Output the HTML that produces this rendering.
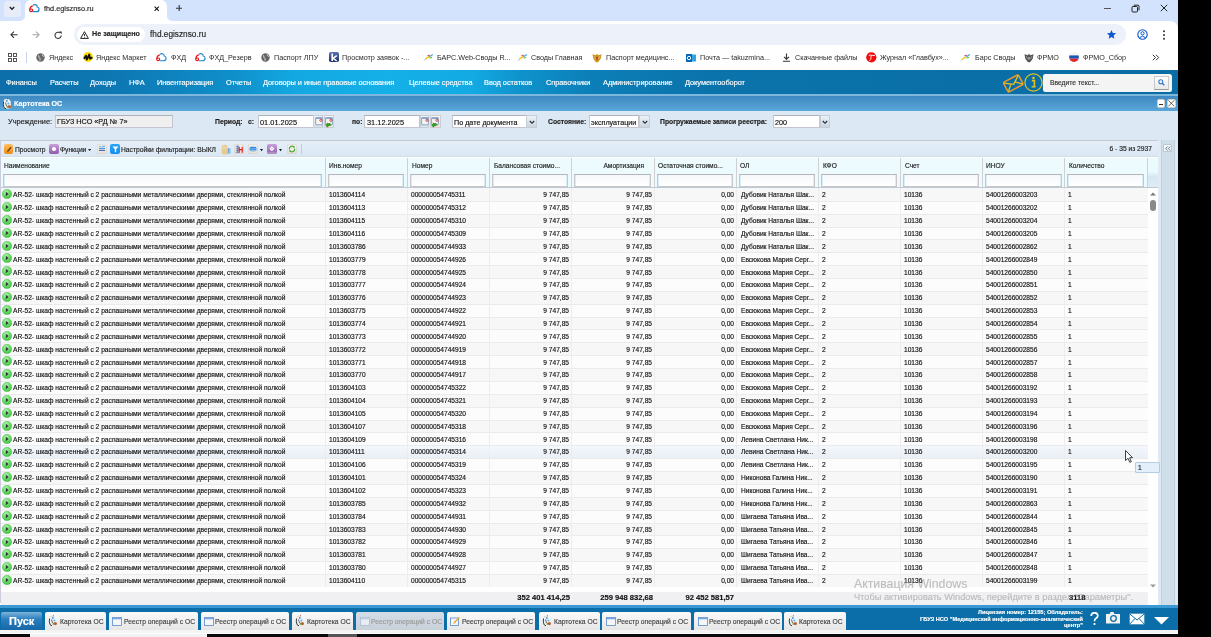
<!DOCTYPE html><html><head><meta charset="utf-8"><style>
*{margin:0;padding:0;box-sizing:border-box}
html,body{width:1211px;height:637px;overflow:hidden;background:#000;font-family:"Liberation Sans",sans-serif}
.a{position:absolute}
.t{position:absolute;white-space:nowrap;line-height:1;-webkit-text-stroke:0.15px currentColor;will-change:transform}
.r{position:absolute;white-space:nowrap;line-height:1;text-align:right}
</style></head><body>
<div class="a" style="left:0;top:0;width:1178px;height:637px;background:#fff;overflow:hidden">
<svg width="0" height="0" style="position:absolute"><defs><radialGradient id="gg" cx="0.4" cy="0.3" r="0.8"><stop offset="0" stop-color="#b0f7b0"/><stop offset="0.55" stop-color="#62da62"/><stop offset="1" stop-color="#3cb83c"/></radialGradient></defs></svg>
<div class="a" style="left:0;top:0;width:1178px;height:30px;background:#d3e3fd"></div>
<div class="a" style="left:4px;top:1px;width:17px;height:16px;border-radius:4px;background:#e6edf9"></div>
<svg class="a" style="left:9px;top:6px" width="6" height="5" viewBox="0 0 6 5"><path d="M0.8 1 L3 3.3 L5.2 1" stroke="#222" stroke-width="1.3" fill="none"/></svg>
<div class="a" style="left:25px;top:0px;width:142px;height:22px;background:#fff;border-radius:6px 6px 0 0"></div>
<svg class="a" style="left:20px;top:14px" width="6" height="7" viewBox="0 0 6 7"><path d="M0 7 Q5 7 5.5 0 L6 7 Z" fill="#fff"/></svg>
<svg class="a" style="left:166px;top:14px" width="6" height="7" viewBox="0 0 6 7"><path d="M6 7 Q1 7 0.5 0 L0 7 Z" fill="#fff"/></svg>
<svg class="a" style="left:26px;top:2px" width="16" height="14" viewBox="0 0 16 14"><path d="M6.8 3.9 Q4.2 4.3 3.7 7.5 Q3.5 9.6 5.2 9.6 Q6.7 9.5 6.7 8.2 Q6.6 6.9 5.2 7 Q4.2 7.1 3.8 8" fill="none" stroke="#e8141c" stroke-width="1.2"/><path d="M7 3.3 Q8.5 2.3 10 2.9 Q11.3 3.5 11.2 5 Q13.1 5.3 13.1 7.4 Q12.9 9.7 10.8 9.7 L6.8 9.7" fill="none" stroke="#1c86d8" stroke-width="1.2"/></svg>
<div class="t" style="left:43.8px;top:5.1px;font-size:7.3px;color:#1f1f1f;font-weight:400;">fhd.egisznso.ru</div>
<svg class="a" style="left:154.3px;top:5.6px" width="5.4" height="5.4" viewBox="0 0 5.4 5.4"><path d="M0.6 0.6 L4.8 4.8 M4.8 0.6 L0.6 4.8" stroke="#111" stroke-width="1.1"/></svg>
<svg class="a" style="left:175.8px;top:4.9px" width="6.4" height="6.4" viewBox="0 0 6.4 6.4"><path d="M3.2 0 V6.4 M0 3.2 H6.4" stroke="#333" stroke-width="1.1"/></svg>
<div class="a" style="left:1104px;top:7.5px;width:7px;height:1px;background:#555"></div>
<svg class="a" style="left:1131px;top:4px" width="9" height="9" viewBox="0 0 9 9"><rect x="1" y="2.5" width="5.5" height="5.5" rx="1" fill="none" stroke="#222" stroke-width="1"/><path d="M2.8 1.2 H7 Q8 1.2 8 2.2 V6.3" fill="none" stroke="#222" stroke-width="1"/></svg>
<svg class="a" style="left:1160px;top:4px" width="8" height="8" viewBox="0 0 8 8"><path d="M0.8 0.8 L7.2 7.2 M7.2 0.8 L0.8 7.2" stroke="#222" stroke-width="1"/></svg>
<div class="a" style="left:0;top:20.5px;width:1178px;height:49.5px;background:#fff;border-radius:0 8px 0 0"></div>
<svg class="a" style="left:9.6px;top:30.8px" width="8" height="8" viewBox="0 0 8 8"><path d="M7.6 3.7 H1 M4 0.6 L0.9 3.7 L4 6.8" stroke="#333" stroke-width="1.05" fill="none"/></svg>
<svg class="a" style="left:31.8px;top:30.8px" width="8" height="8" viewBox="0 0 8 8"><path d="M0.4 3.7 H7 M4 0.6 L7.1 3.7 L4 6.8" stroke="#a8a8a8" stroke-width="1.05" fill="none"/></svg>
<svg class="a" style="left:53.8px;top:30.6px" width="8.4" height="8.4" viewBox="0 0 8.4 8.4"><path d="M7.2 4.4 A3.1 3.1 0 1 1 6 1.9" stroke="#333" stroke-width="1.05" fill="none"/><path d="M4.9 0.5 H7.7 V3.3 Z" fill="#333"/></svg>
<div class="a" style="left:74px;top:24.3px;width:1052px;height:20.5px;background:#edf2fa;border-radius:10px"></div>
<div class="a" style="left:76.5px;top:26.8px;width:68px;height:15.2px;background:#fff;border-radius:8px"></div>
<svg class="a" style="left:80px;top:30.5px" width="9" height="8" viewBox="0 0 9 8"><path d="M4.5 0.7 L8.4 7.4 H0.6 Z" fill="none" stroke="#222" stroke-width="1"/><path d="M4.5 3 V5.2 M4.5 6 V6.6" stroke="#222" stroke-width="0.9"/></svg>
<div class="t" style="left:91.8px;top:30.4px;font-size:7.2px;color:#1f1f1f;font-weight:700;">Не защищено</div>
<div class="t" style="left:149.7px;top:30.6px;font-size:8.28px;color:#1f1f1f;font-weight:400;">fhd.egisznso.ru</div>
<svg class="a" style="left:1106px;top:29px" width="11" height="11" viewBox="0 0 24 24"><path d="M12 2 L14.9 8.6 L22 9.3 L16.6 14 L18.2 21 L12 17.3 L5.8 21 L7.4 14 L2 9.3 L9.1 8.6 Z" fill="#0b57d0"/></svg>
<svg class="a" style="left:1136.5px;top:29px" width="11" height="11" viewBox="0 0 11 11"><circle cx="5.5" cy="5.5" r="4.7" fill="none" stroke="#0b57d0" stroke-width="1.1"/><circle cx="5.5" cy="4.3" r="1.6" fill="none" stroke="#0b57d0" stroke-width="1"/><path d="M2.6 8.6 Q5.5 5.8 8.4 8.6" fill="none" stroke="#0b57d0" stroke-width="1"/></svg>
<svg class="a" style="left:1162px;top:29.5px" width="4" height="10" viewBox="0 0 4 10"><circle cx="2" cy="1.3" r="1" fill="#333"/><circle cx="2" cy="5" r="1" fill="#333"/><circle cx="2" cy="8.7" r="1" fill="#333"/></svg>
<svg class="a" style="left:8px;top:53px" width="9" height="9" viewBox="0 0 9 9"><rect x="0.5" y="0.5" width="3" height="3" fill="none" stroke="#444" stroke-width="0.9"/><rect x="5.5" y="0.5" width="3" height="3" fill="none" stroke="#444" stroke-width="0.9"/><rect x="0.5" y="5.5" width="3" height="3" fill="none" stroke="#444" stroke-width="0.9"/><rect x="5.5" y="5.5" width="3" height="3" fill="none" stroke="#444" stroke-width="0.9"/></svg>
<div class="a" style="left:26px;top:52px;width:1px;height:11px;background:#c6d4ee"></div>
<svg class="a" style="left:36px;top:53px" width="9" height="9" viewBox="0 0 9 9"><circle cx="4.5" cy="4.5" r="4.2" fill="#666"/><path d="M2 2.5 Q3.5 3 3 4.5 Q4.5 5 4 7.5 M6 1.5 Q6.5 3 7.8 3.5" stroke="#eee" stroke-width="0.9" fill="none"/></svg>
<div class="t" style="left:48.8px;top:53.8px;font-size:7.2px;color:#2a2a2a;font-weight:400;-webkit-text-stroke:0">Яндекс</div>
<svg class="a" style="left:82.9px;top:52px" width="10" height="10" viewBox="0 0 10 10"><circle cx="5" cy="5" r="4.9" fill="#ffdc00"/><path d="M1 6.8 L3 3.8 L3.8 7.6 L6.2 2.6 L7 6.8 L9.4 5.4" stroke="#111" stroke-width="1.9" fill="none" stroke-linejoin="round"/></svg>
<div class="t" style="left:96px;top:53.8px;font-size:7.2px;color:#2a2a2a;font-weight:400;-webkit-text-stroke:0">Яндекс Маркет</div>
<svg class="a" style="left:152.7px;top:51px" width="16" height="14" viewBox="0 0 16 14"><path d="M6.8 3.9 Q4.2 4.3 3.7 7.5 Q3.5 9.6 5.2 9.6 Q6.7 9.5 6.7 8.2 Q6.6 6.9 5.2 7 Q4.2 7.1 3.8 8" fill="none" stroke="#e8141c" stroke-width="1.1"/><path d="M7 3.3 Q8.5 2.3 10 2.9 Q11.3 3.5 11.2 5 Q13.1 5.3 13.1 7.4 Q12.9 9.7 10.8 9.7 L6.8 9.7" fill="none" stroke="#1c86d8" stroke-width="1.1"/></svg>
<div class="t" style="left:171px;top:53.8px;font-size:7.2px;color:#2a2a2a;font-weight:400;-webkit-text-stroke:0">ФХД</div>
<svg class="a" style="left:191.7px;top:51px" width="16" height="14" viewBox="0 0 16 14"><path d="M6.8 3.9 Q4.2 4.3 3.7 7.5 Q3.5 9.6 5.2 9.6 Q6.7 9.5 6.7 8.2 Q6.6 6.9 5.2 7 Q4.2 7.1 3.8 8" fill="none" stroke="#e8141c" stroke-width="1.1"/><path d="M7 3.3 Q8.5 2.3 10 2.9 Q11.3 3.5 11.2 5 Q13.1 5.3 13.1 7.4 Q12.9 9.7 10.8 9.7 L6.8 9.7" fill="none" stroke="#1c86d8" stroke-width="1.1"/></svg>
<div class="t" style="left:209px;top:53.8px;font-size:7.2px;color:#2a2a2a;font-weight:400;-webkit-text-stroke:0">ФХД_Резерв</div>
<svg class="a" style="left:261px;top:53px" width="9" height="9" viewBox="0 0 9 9"><circle cx="4.5" cy="4.5" r="4.2" fill="#666"/><path d="M2 2.5 Q3.5 3 3 4.5 Q4.5 5 4 7.5 M6 1.5 Q6.5 3 7.8 3.5" stroke="#eee" stroke-width="0.9" fill="none"/></svg>
<div class="t" style="left:274.3px;top:53.8px;font-size:7.2px;color:#2a2a2a;font-weight:400;-webkit-text-stroke:0">Паспорт ЛПУ</div>
<svg class="a" style="left:328.9px;top:52px" width="10" height="10" viewBox="0 0 10 10"><defs><linearGradient id="kg" x1="0" y1="0" x2="0" y2="1"><stop offset="0" stop-color="#5a74b0"/><stop offset="1" stop-color="#1c3068"/></linearGradient></defs><rect x="0" y="0" width="10" height="10" rx="1.8" fill="url(#kg)"/><path d="M3.2 1.4 V9" stroke="#fff" stroke-width="1.6"/><path d="M7.8 3.6 L4 6.3 L7.8 9" stroke="#fff" stroke-width="1.5" fill="none"/></svg>
<div class="t" style="left:342px;top:53.8px;font-size:7.2px;color:#2a2a2a;font-weight:400;-webkit-text-stroke:0">Просмотр заявок -...</div>
<svg class="a" style="left:422.7px;top:53px" width="11" height="9" viewBox="0 0 11 9"><path d="M0.6 7.8 L3.2 6.4 M1.4 6.6 L4 5" stroke="#d6dae6" stroke-width="1"/><path d="M2.6 5.8 L5.8 3.8" stroke="#f5c518" stroke-width="1.4" stroke-linecap="round"/><path d="M5 2.6 L6.4 2.2" stroke="#e04848" stroke-width="1.1" stroke-linecap="round"/><path d="M6.8 3.4 L9.4 1.8" stroke="#2aa8f2" stroke-width="1.2" stroke-linecap="round"/><path d="M6.8 5 L8.6 4.5" stroke="#6ab82a" stroke-width="1.1" stroke-linecap="round"/></svg>
<div class="t" style="left:436.7px;top:53.8px;font-size:7.2px;color:#2a2a2a;font-weight:400;-webkit-text-stroke:0">БАРС.Web-Своды R...</div>
<svg class="a" style="left:517.4000000000001px;top:53px" width="11" height="9" viewBox="0 0 11 9"><path d="M0.6 7.8 L3.2 6.4 M1.4 6.6 L4 5" stroke="#d6dae6" stroke-width="1"/><path d="M2.6 5.8 L5.8 3.8" stroke="#f5c518" stroke-width="1.4" stroke-linecap="round"/><path d="M5 2.6 L6.4 2.2" stroke="#e04848" stroke-width="1.1" stroke-linecap="round"/><path d="M6.8 3.4 L9.4 1.8" stroke="#2aa8f2" stroke-width="1.2" stroke-linecap="round"/><path d="M6.8 5 L8.6 4.5" stroke="#6ab82a" stroke-width="1.1" stroke-linecap="round"/></svg>
<div class="t" style="left:531px;top:53.8px;font-size:7.2px;color:#2a2a2a;font-weight:400;-webkit-text-stroke:0">Своды Главная</div>
<svg class="a" style="left:592px;top:52.5px" width="10" height="10" viewBox="0 0 10 10"><path d="M5 0.8 L6.2 2.2 L9.5 1.2 L8.8 5.5 L6.5 8.8 L5 9.5 L3.5 8.8 L1.2 5.5 L0.5 1.2 L3.8 2.2 Z" fill="#c8961e"/><path d="M2 3 L3.5 6 M8 3 L6.5 6" stroke="#fff" stroke-width="0.6" opacity="0.6"/><rect x="4" y="4" width="2" height="2.6" fill="#d23a2a"/></svg>
<div class="t" style="left:605.5px;top:53.8px;font-size:7.2px;color:#2a2a2a;font-weight:400;-webkit-text-stroke:0">Паспорт медицинс...</div>
<svg class="a" style="left:686px;top:52.5px" width="10" height="10" viewBox="0 0 10 10"><rect x="3.5" y="1.5" width="6.5" height="7" fill="#28a8ea"/><rect x="0" y="1" width="6" height="8" rx="0.8" fill="#0364b8"/><circle cx="3" cy="5" r="1.7" fill="none" stroke="#fff" stroke-width="1"/></svg>
<div class="t" style="left:700px;top:53.8px;font-size:7.2px;color:#2a2a2a;font-weight:400;-webkit-text-stroke:0">Почта — takuzmina...</div>
<svg class="a" style="left:782px;top:53px" width="9" height="9" viewBox="0 0 9 9"><path d="M4.5 0.5 V6 M2 3.8 L4.5 6.2 L7 3.8 M1 8.3 H8" stroke="#333" stroke-width="1.1" fill="none"/></svg>
<div class="t" style="left:794.5px;top:53.8px;font-size:7.2px;color:#2a2a2a;font-weight:400;-webkit-text-stroke:0">Скачанные файлы</div>
<svg class="a" style="left:865.8px;top:51.8px" width="11" height="11" viewBox="0 0 11 11"><circle cx="5.3" cy="5.3" r="5.1" fill="#f40a0a"/><path d="M2.8 3.4 Q4 2.6 5.2 3.3 L9 3.5 M5.2 3.3 Q5 6 4.6 7.6 Q4.2 8.6 3.3 8.4" stroke="#fff" stroke-width="0.9" fill="none"/></svg>
<div class="t" style="left:879.6px;top:53.8px;font-size:7.2px;color:#2a2a2a;font-weight:400;-webkit-text-stroke:0">Журнал «Главбух»...</div>
<svg class="a" style="left:960.3000000000001px;top:53px" width="11" height="9" viewBox="0 0 11 9"><path d="M0.6 7.8 L3.2 6.4 M1.4 6.6 L4 5" stroke="#d6dae6" stroke-width="1"/><path d="M2.6 5.8 L5.8 3.8" stroke="#f5c518" stroke-width="1.4" stroke-linecap="round"/><path d="M5 2.6 L6.4 2.2" stroke="#e04848" stroke-width="1.1" stroke-linecap="round"/><path d="M6.8 3.4 L9.4 1.8" stroke="#2aa8f2" stroke-width="1.2" stroke-linecap="round"/><path d="M6.8 5 L8.6 4.5" stroke="#6ab82a" stroke-width="1.1" stroke-linecap="round"/></svg>
<div class="t" style="left:974.5px;top:53.8px;font-size:7.2px;color:#2a2a2a;font-weight:400;-webkit-text-stroke:0">Барс Своды</div>
<svg class="a" style="left:1024px;top:52.5px" width="10" height="10" viewBox="0 0 10 10"><path d="M5 0.8 L6.2 2.2 L9.5 1.2 L8.8 5.5 L6.5 8.8 L5 9.5 L3.5 8.8 L1.2 5.5 L0.5 1.2 L3.8 2.2 Z" fill="#555"/><path d="M2 3 L3.5 6 M8 3 L6.5 6" stroke="#fff" stroke-width="0.6" opacity="0.6"/><rect x="4" y="4" width="2" height="2.6" fill="#999"/></svg>
<div class="t" style="left:1037.3px;top:53.8px;font-size:7.2px;color:#2a2a2a;font-weight:400;-webkit-text-stroke:0">ФРМО</div>
<svg class="a" style="left:1069.4px;top:52.3px" width="10" height="10" viewBox="0 0 10 10"><clipPath id="fc"><circle cx="5" cy="5" r="4.9"/></clipPath><g clip-path="url(#fc)"><rect x="0" y="0" width="10" height="3.4" fill="#f4f4f4"/><rect x="0" y="3.4" width="10" height="3.3" fill="#1c57b5"/><rect x="0" y="6.7" width="10" height="3.3" fill="#e0242a"/></g></svg>
<div class="t" style="left:1083px;top:53.8px;font-size:7.2px;color:#2a2a2a;font-weight:400;-webkit-text-stroke:0">ФРМО_Сбор</div>
<svg class="a" style="left:1151.5px;top:54px" width="8" height="7" viewBox="0 0 8 7"><path d="M0.8 0.8 L3.5 3.5 L0.8 6.2 M4 0.8 L6.7 3.5 L4 6.2" stroke="#333" stroke-width="1" fill="none"/></svg>
<div class="a" style="left:0;top:70px;width:1178px;height:25px;background:linear-gradient(90deg,#0d6ea9 0%,#0d78b3 10%,#0f90cb 20%,#13a8e2 25%,#15b0e8 33%,#13aae4 40%,#0f93cd 44%,#0c7fb8 50%,#0b73ab 60%,#0a6ca4 100%)"></div>
<div class="a" style="left:0;top:70px;width:1178px;height:25px;opacity:.18;background-image:radial-gradient(#000 0.5px,transparent 0.6px);background-size:2px 2px"></div>
<div class="a" style="left:0;top:94.2px;width:1178px;height:1.6px;background:#7db7dc"></div>
<div class="t" style="left:6px;top:79.2px;font-size:7.4px;color:#fff;font-weight:400;letter-spacing:-0.05px">Финансы</div>
<div class="t" style="left:49.5px;top:79.2px;font-size:7.4px;color:#fff;font-weight:400;letter-spacing:-0.05px">Расчеты</div>
<div class="t" style="left:90px;top:79.2px;font-size:7.4px;color:#fff;font-weight:400;letter-spacing:-0.05px">Доходы</div>
<div class="t" style="left:128.8px;top:79.2px;font-size:7.4px;color:#fff;font-weight:400;letter-spacing:-0.05px">НФА</div>
<div class="t" style="left:156.5px;top:79.2px;font-size:7.4px;color:#fff;font-weight:400;letter-spacing:-0.05px">Инвентаризация</div>
<div class="t" style="left:226px;top:79.2px;font-size:7.4px;color:#fff;font-weight:400;letter-spacing:-0.05px">Отчеты</div>
<div class="t" style="left:263.4px;top:79.2px;font-size:7.4px;color:#fff;font-weight:400;letter-spacing:-0.05px">Договоры и иные правовые основания</div>
<div class="t" style="left:408.6px;top:79.2px;font-size:7.4px;color:#fff;font-weight:400;letter-spacing:-0.05px">Целевые средства</div>
<div class="t" style="left:484.4px;top:79.2px;font-size:7.4px;color:#fff;font-weight:400;letter-spacing:-0.05px">Ввод остатков</div>
<div class="t" style="left:546px;top:79.2px;font-size:7.4px;color:#fff;font-weight:400;letter-spacing:-0.05px">Справочники</div>
<div class="t" style="left:602.8px;top:79.2px;font-size:7.4px;color:#fff;font-weight:400;letter-spacing:-0.05px">Администрирование</div>
<div class="t" style="left:685px;top:79.2px;font-size:7.4px;color:#fff;font-weight:400;letter-spacing:-0.05px">Документооборот</div>
<svg class="a" style="left:1002px;top:72.5px" width="22" height="20" viewBox="0 0 22 20"><g transform="rotate(-28 11 10)"><rect x="2.5" y="5" width="17" height="11" rx="1.5" fill="none" stroke="#e8962a" stroke-width="1.6"/><path d="M3 5.8 L11 11.5 L19 5.8 M3 15.5 L8.5 10 M19 15.5 L13.5 10" stroke="#f0c020" stroke-width="1.3" fill="none"/></g></svg>
<svg class="a" style="left:1023.5px;top:73px" width="19" height="19" viewBox="0 0 19 19"><circle cx="9.5" cy="9.5" r="8.6" fill="none" stroke="#e6c21e" stroke-width="1.2"/><circle cx="9.5" cy="5" r="1.3" fill="#e6c21e"/><path d="M7.8 7.6 H10.4 V13.8 H11.6 M7.6 13.8 H11.6" stroke="#e6c21e" stroke-width="1.6" fill="none"/></svg>
<div class="a" style="left:1043.3px;top:73.5px;width:128.4px;height:18.1px;background:#f4f4f4;border-radius:2.5px"></div>
<div class="t" style="left:1049.6px;top:80.4px;font-size:6.75px;color:#333;font-weight:400;">Введите текст...</div>
<div class="a" style="left:1154.4px;top:76px;width:14.5px;height:13.8px;background:linear-gradient(#fdfdfd,#e9e9e9);border:1px solid #c9c9c9;border-bottom-color:#9a9a9a"></div>
<svg class="a" style="left:1158px;top:79px" width="7" height="7" viewBox="0 0 7 7"><circle cx="2.8" cy="2.8" r="2" fill="none" stroke="#3a7bc8" stroke-width="1.1"/><path d="M4.2 4.2 L6.3 6.3" stroke="#3a7bc8" stroke-width="1.4"/></svg>
<div class="a" style="left:0;top:95.8px;width:1178px;height:15px;background:linear-gradient(#3d88c1,#5aa7d9)"></div>
<div class="a" style="left:0;top:110.5px;width:1178px;height:0.9px;background:#d3d5d6"></div>
<svg class="a" style="left:2px;top:97.5px" width="10" height="12" viewBox="0 0 10 12"><path d="M2.5 1.2 Q4 0.6 6.5 1 L8.6 3 L9 8.6 L7.6 10.6 L3.4 10.8 L1.3 9.6 L0.8 4.8 Z" fill="#eef4fa"/><path d="M1.5 3.5 Q0.8 7 2.2 9.8 L4 10.8" stroke="#222" stroke-width="0.9" fill="none"/><path d="M3.5 4.5 L4.5 8" stroke="#555" stroke-width="0.9"/><circle cx="4.8" cy="3" r="0.9" fill="#4a90d9"/><circle cx="6.4" cy="5.6" r="1" fill="#6aaee8"/><rect x="4.6" y="7.8" width="1.6" height="2" fill="#6aa832"/><circle cx="7.4" cy="8.6" r="1.6" fill="#b8602e"/><path d="M2.4 1.6 L3.6 1.2" stroke="#e0c030" stroke-width="0.8"/><path d="M4.8 0.9 L6 0.8" stroke="#b02030" stroke-width="0.8"/></svg>
<div class="t" style="left:13.8px;top:99.6px;font-size:7.2px;color:#fff;font-weight:700;">Картотека ОС</div>
<div class="a" style="left:1156.9px;top:99.4px;width:8.4px;height:8.5px;background:#fff;border-radius:2px;border:0.5px solid #d8cfc4"></div>
<div class="a" style="left:1158.9px;top:104px;width:4.4px;height:1.3px;background:#333"></div>
<div class="a" style="left:1167.4px;top:99.4px;width:8.4px;height:8.5px;background:#fff;border-radius:2px;border:0.5px solid #d8cfc4"></div>
<svg class="a" style="left:1168.4px;top:100.4px" width="6.6" height="6.6" viewBox="0 0 6.6 6.6"><path d="M0.4 0.4 L6.2 6.2 M6.2 0.4 L0.4 6.2" stroke="#333" stroke-width="0.75"/></svg>
<div class="a" style="left:0;top:111.2px;width:1178px;height:29.3px;background:#dce8f3"></div>
<div class="t" style="left:7.9px;top:118.1px;font-size:7.33px;color:#222;font-weight:400;">Учреждение:</div>
<div class="a" style="left:55.3px;top:115.3px;width:117.3px;height:13.2px;background:#efefef;border:1px solid #c3c6cf;border-top-color:#b0b3bb"></div>
<div class="t" style="left:57.4px;top:118.2px;font-size:7.25px;color:#111;font-weight:400;">ГБУЗ НСО «РД № 7»</div>
<div class="t" style="left:215px;top:118.6px;font-size:6.8px;color:#222;font-weight:700;">Период:</div>
<div class="t" style="left:248.4px;top:118.6px;font-size:6.8px;color:#222;font-weight:700;">с:</div>
<div class="a" style="left:257.6px;top:115.1px;width:56px;height:13.1px;background:#fff;border:1px solid #c3c6cf;border-top-color:#b0b3bb"></div><div class="t" style="left:260.20000000000005px;top:119.0px;font-size:7.4px;color:#111;font-weight:400;">01.01.2025</div><div class="a" style="left:313.20000000000005px;top:115.1px;width:9.8px;height:13.1px;background:linear-gradient(#eef5fa,#d8e2ea);border:0.6px solid #c5ced8"></div><svg class="a" style="left:315.0px;top:117.2px" width="8" height="8.5" viewBox="0 0 8 8.5"><rect x="0.6" y="0.6" width="6.8" height="7.2" rx="0.6" fill="#f7f4f0" stroke="#7d9cc6" stroke-width="0.9"/><rect x="0.6" y="0.6" width="6.8" height="1.4" fill="#8aa6cc"/><circle cx="5.9" cy="3.3" r="1.1" fill="none" stroke="#c62828" stroke-width="0.8"/></svg><div class="a" style="left:323.8px;top:115.1px;width:10.4px;height:13.1px;background:linear-gradient(#fbf7f3,#eae3dc);border:0.6px solid #d0ccd2"></div><svg class="a" style="left:325.0px;top:117.2px" width="8" height="11" viewBox="0 0 8 11"><rect x="0.6" y="0.6" width="6.8" height="7.2" rx="0.6" fill="#f7f4f0" stroke="#7d9cc6" stroke-width="0.9"/><rect x="0.6" y="0.6" width="6.8" height="1.4" fill="#8aa6cc"/><circle cx="5.9" cy="3.3" r="1.1" fill="none" stroke="#c62828" stroke-width="0.8"/><path d="M0.3 8.2 L2.6 5.6 L3.2 6.3 Q5 5.2 6.6 7.6 Q5.3 9.6 3.4 9.3 L2.6 10.7 Z" fill="#3a9a2a"/></svg>
<div class="t" style="left:351.6px;top:118.6px;font-size:6.8px;color:#222;font-weight:700;">по:</div>
<div class="a" style="left:364px;top:115.1px;width:56px;height:13.1px;background:#fff;border:1px solid #c3c6cf;border-top-color:#b0b3bb"></div><div class="t" style="left:366.6px;top:119.0px;font-size:7.4px;color:#111;font-weight:400;">31.12.2025</div><div class="a" style="left:419.6px;top:115.1px;width:9.8px;height:13.1px;background:linear-gradient(#eef5fa,#d8e2ea);border:0.6px solid #c5ced8"></div><svg class="a" style="left:421.4px;top:117.2px" width="8" height="8.5" viewBox="0 0 8 8.5"><rect x="0.6" y="0.6" width="6.8" height="7.2" rx="0.6" fill="#f7f4f0" stroke="#7d9cc6" stroke-width="0.9"/><rect x="0.6" y="0.6" width="6.8" height="1.4" fill="#8aa6cc"/><circle cx="5.9" cy="3.3" r="1.1" fill="none" stroke="#c62828" stroke-width="0.8"/></svg><div class="a" style="left:430.2px;top:115.1px;width:10.4px;height:13.1px;background:linear-gradient(#fbf7f3,#eae3dc);border:0.6px solid #d0ccd2"></div><svg class="a" style="left:431.4px;top:117.2px" width="8" height="11" viewBox="0 0 8 11"><rect x="0.6" y="0.6" width="6.8" height="7.2" rx="0.6" fill="#f7f4f0" stroke="#7d9cc6" stroke-width="0.9"/><rect x="0.6" y="0.6" width="6.8" height="1.4" fill="#8aa6cc"/><circle cx="5.9" cy="3.3" r="1.1" fill="none" stroke="#c62828" stroke-width="0.8"/><path d="M0.3 8.2 L2.6 5.6 L3.2 6.3 Q5 5.2 6.6 7.6 Q5.3 9.6 3.4 9.3 L2.6 10.7 Z" fill="#3a9a2a"/></svg>
<div class="a" style="left:451.6px;top:115.2px;width:75px;height:13.0px;background:#fff;border:1px solid #c3c6cf;border-top-color:#b0b3bb"></div><div class="t" style="left:453.70000000000005px;top:118.5px;font-size:7.2px;color:#111;font-weight:400;">По дате документа</div><div class="a" style="left:526.1px;top:115.2px;width:10.9px;height:13px;background:linear-gradient(#edf2f7,#c8d5e0);border:0.5px solid #c5cdd6"></div><svg class="a" style="left:528.9px;top:120px" width="6" height="5" viewBox="0 0 6 5"><path d="M0.8 1 L3 3.3 L5.2 1" stroke="#223" stroke-width="1.1" fill="none"/></svg>
<div class="t" style="left:548px;top:119px;font-size:6.8px;color:#222;font-weight:700;">Состояние:</div>
<div class="a" style="left:589.3px;top:115.2px;width:50px;height:13.0px;background:#fff;border:1px solid #c3c6cf;border-top-color:#b0b3bb"></div><div class="t" style="left:591.4px;top:118.5px;font-size:7.2px;color:#111;font-weight:400;">эксплуатации</div><div class="a" style="left:638.8px;top:115.2px;width:10.9px;height:13px;background:linear-gradient(#edf2f7,#c8d5e0);border:0.5px solid #c5cdd6"></div><svg class="a" style="left:641.5999999999999px;top:120px" width="6" height="5" viewBox="0 0 6 5"><path d="M0.8 1 L3 3.3 L5.2 1" stroke="#223" stroke-width="1.1" fill="none"/></svg>
<div class="t" style="left:659.6px;top:119px;font-size:6.8px;color:#222;font-weight:700;">Прогружаемые записи реестра:</div>
<div class="a" style="left:773px;top:115.2px;width:47px;height:13.0px;background:#fff;border:1px solid #c3c6cf;border-top-color:#b0b3bb"></div><div class="t" style="left:775.1px;top:118.5px;font-size:7.2px;color:#111;font-weight:400;">200</div><div class="a" style="left:819.5px;top:115.2px;width:10.9px;height:13px;background:linear-gradient(#edf2f7,#c8d5e0);border:0.5px solid #c5cdd6"></div><svg class="a" style="left:822.3px;top:120px" width="6" height="5" viewBox="0 0 6 5"><path d="M0.8 1 L3 3.3 L5.2 1" stroke="#223" stroke-width="1.1" fill="none"/></svg>
<div class="a" style="left:0;top:140.3px;width:1158px;height:17.2px;background:linear-gradient(#e3eef8,#dbe8f4);border-top:1px solid #c5c9cf;border-bottom:1px solid #d3dde6"></div>
<div class="a" style="left:3.6px;top:144.3px;width:9.8px;height:10px;border-radius:2px;background:linear-gradient(#ffc060,#f08a10)"></div><svg class="a" style="left:5.5px;top:145.5px" width="6" height="7" viewBox="0 0 6 7"><path d="M1 6.5 L1.5 4.5 L4.5 0.8 L5.5 1.8 L2.5 5.5 Z" fill="#6a4010"/></svg>
<div class="t" style="left:14.5px;top:146.5px;font-size:6.7px;color:#222;font-weight:400;">Просмотр</div>
<div class="a" style="left:49px;top:144.3px;width:9.8px;height:10px;border-radius:2px;background:linear-gradient(#c9a0dc,#8e5aa8)"></div><div class="a" style="left:51.5px;top:147.3px;width:4.5px;height:4px;border-radius:50%;background:#fff"></div>
<div class="t" style="left:60px;top:146.5px;font-size:6.7px;color:#222;font-weight:400;">Функции</div>
<svg class="a" style="left:88.3px;top:149px" width="3.2" height="2.6" viewBox="0 0 4 3"><path d="M0 0 H4 L2 2.5 Z" fill="#222"/></svg>
<div class="a" style="left:97px;top:144.3px;width:9.8px;height:10px;border-radius:2px;background:linear-gradient(#f7f3ef,#e6e0da)"></div><svg class="a" style="left:97px;top:144.3px" width="10" height="10" viewBox="0 0 10 10"><rect x="0.3" y="0.3" width="9.2" height="9.4" rx="1.8" fill="none" stroke="#d6d0ca" stroke-width="0.6"/><path d="M2 2.3 H3.6 M4.8 2.3 H8" stroke="#3aa8f0" stroke-width="0.9"/><path d="M2 4.3 H8" stroke="#1a78d8" stroke-width="0.9"/><path d="M2 6.3 H8" stroke="#0b3fa8" stroke-width="0.9"/></svg>
<div class="a" style="left:110.3px;top:144.3px;width:9.8px;height:10px;border-radius:2px;background:linear-gradient(#2aa4fa,#168ef0)"></div><svg class="a" style="left:112px;top:146px" width="7" height="7" viewBox="0 0 7 7"><path d="M0.5 0.5 H6.5 L4.2 3.3 V6.5 L2.8 5.8 V3.3 Z" fill="#fff"/></svg>
<div class="t" style="left:121.4px;top:146.5px;font-size:6.7px;color:#222;font-weight:400;">Настройки фильтрации: ВЫКЛ</div>
<svg class="a" style="left:220.8px;top:144px" width="10" height="11" viewBox="0 0 10 11"><path d="M0.6 1.6 L4.8 0.8 L6.6 2 L6.6 10.2 L2.2 10.4 L0.6 9.4 Z" fill="#e9c98f"/><path d="M1.4 3 H5.6 M1.4 4.6 H5.6" stroke="#fff" stroke-width="0.5" opacity="0.6"/><path d="M6.6 4 L9.6 4 L9.6 9.4 L6.6 10 Z" fill="#8cc4e8"/><path d="M7.4 5.2 V8.6" stroke="#4a90c8" stroke-width="0.6"/></svg>
<div class="a" style="left:234.3px;top:144.3px;width:9.8px;height:10px;border-radius:2px;background:linear-gradient(#f7f3ef,#e6e0da)"></div><svg class="a" style="left:234.3px;top:144.3px" width="10" height="10" viewBox="0 0 10 10"><rect x="0.3" y="0.3" width="9.2" height="9.4" rx="1.8" fill="none" stroke="#d2ccc6" stroke-width="0.6"/><path d="M1.8 2.2 H5 M1.8 4.2 H5 M1.8 6.2 H5 M1.8 8.2 H5" stroke="#1a6ad0" stroke-width="0.7"/><path d="M3.6 1.6 V8.6" stroke="#1a6ad0" stroke-width="0.6"/><path d="M5.2 2.8 V8.8 M8.2 2.8 V8.8 M5.2 5.6 H8.2" stroke="#e01a10" stroke-width="1.1"/></svg>
<div class="a" style="left:248.2px;top:144.3px;width:9.8px;height:10px;border-radius:2px;background:linear-gradient(#f7f3ef,#e6e0da)"></div><svg class="a" style="left:248.2px;top:144.3px" width="10" height="10" viewBox="0 0 10 10"><rect x="0.3" y="0.3" width="9.2" height="9.4" rx="1.8" fill="none" stroke="#d2ccc6" stroke-width="0.6"/><path d="M1.6 4.2 Q1.6 2.8 3 2.8 H7 Q8.4 2.8 8.4 4.2 V6.6 H1.6 Z" fill="#2f8ae0"/><path d="M1.6 4.8 H8.4" stroke="#9fd0f8" stroke-width="0.7"/><rect x="2.6" y="6.6" width="4.8" height="1.2" fill="#a8c8e8"/></svg>
<svg class="a" style="left:259.5px;top:149px" width="3" height="2.5" viewBox="0 0 3 2.5"><path d="M0 0 H3 L1.5 2.2 Z" fill="#111"/></svg>
<div class="a" style="left:267.3px;top:144.3px;width:9.8px;height:10px;border-radius:2px;background:linear-gradient(#c8a0dc,#9460b0)"></div><svg class="a" style="left:267.3px;top:144.3px" width="10" height="10" viewBox="0 0 10 10"><rect x="0.3" y="8.2" width="9.2" height="1.5" rx="0.8" fill="#b898c8"/><path d="M4.9 2.2 L7.4 4.7 L4.9 7.2 L2.4 4.7 Z" fill="#fff"/><circle cx="4.9" cy="4.7" r="0.6" fill="#b080c8"/></svg>
<svg class="a" style="left:279px;top:149px" width="3" height="2.5" viewBox="0 0 3 2.5"><path d="M0 0 H3 L1.5 2.2 Z" fill="#111"/></svg>
<div class="a" style="left:287.3px;top:144.3px;width:9.8px;height:10px;border-radius:2px;background:linear-gradient(#f7f3ef,#e6e0da)"></div><svg class="a" style="left:287.3px;top:144.3px" width="10" height="10" viewBox="0 0 10 10"><rect x="0.3" y="0.3" width="9.2" height="9.4" rx="1.8" fill="none" stroke="#d2ccc6" stroke-width="0.6"/><path d="M2.4 5.4 A2.6 2.6 0 0 1 7 3.2" stroke="#3aa830" stroke-width="1.1" fill="none"/><path d="M7.6 4.6 A2.6 2.6 0 0 1 3 6.8" stroke="#3aa830" stroke-width="1.1" fill="none"/><path d="M6 2.2 L7.8 2.6 L7.2 4.4 Z M4 7.8 L2.2 7.4 L2.8 5.6 Z" fill="#3aa830"/></svg>
<div class="a" style="left:300.6px;top:144px;width:0.8px;height:10px;background:#c2ccd6"></div>
<div class="t" style="left:1152.4px;top:145.8px;font-size:6.7px;color:#222;font-weight:400;transform:translateX(-100%)">6 - 35 из 2937</div>
<div class="a" style="left:0;top:157.5px;width:1158px;height:31.2px;background:#edfbfe"></div>
<div class="a" style="left:1147px;top:157.5px;width:11px;height:31.2px;background:linear-gradient(#eafafd 0%,#eafafd 45%,#d7e7f3 60%,#e0edf6 100%)"></div>
<div class="t" style="left:4.2px;top:162.7px;font-size:6.6px;color:#222;font-weight:400;">Наименование</div>
<div class="a" style="left:2.8px;top:174.2px;width:319.1px;height:13.3px;background:linear-gradient(#f6f8fa,#fff);border:1px solid #c8c8cc;border-top-color:#b4b6bb;box-shadow:inset 1px 0 0 #d8ecfa, inset -1px 0 0 #d8ecfa"></div>
<div class="a" style="left:324.5px;top:158px;width:1px;height:30.5px;background:#d0d0d0"></div>
<div class="t" style="left:329.2px;top:162.7px;font-size:6.6px;color:#222;font-weight:400;">Инв.номер</div>
<div class="a" style="left:327.8px;top:174.2px;width:76.4px;height:13.3px;background:linear-gradient(#f6f8fa,#fff);border:1px solid #c8c8cc;border-top-color:#b4b6bb;box-shadow:inset 1px 0 0 #d8ecfa, inset -1px 0 0 #d8ecfa"></div>
<div class="a" style="left:406.8px;top:158px;width:1px;height:30.5px;background:#d0d0d0"></div>
<div class="t" style="left:411.5px;top:162.7px;font-size:6.6px;color:#222;font-weight:400;">Номер</div>
<div class="a" style="left:410.1px;top:174.2px;width:76.1px;height:13.3px;background:linear-gradient(#f6f8fa,#fff);border:1px solid #c8c8cc;border-top-color:#b4b6bb;box-shadow:inset 1px 0 0 #d8ecfa, inset -1px 0 0 #d8ecfa"></div>
<div class="a" style="left:488.8px;top:158px;width:1px;height:30.5px;background:#d0d0d0"></div>
<div class="t" style="left:493.5px;top:162.7px;font-size:6.6px;color:#222;font-weight:400;">Балансовая стоимо...</div>
<div class="a" style="left:492.1px;top:174.2px;width:76.29999999999998px;height:13.3px;background:linear-gradient(#f6f8fa,#fff);border:1px solid #c8c8cc;border-top-color:#b4b6bb;box-shadow:inset 1px 0 0 #d8ecfa, inset -1px 0 0 #d8ecfa"></div>
<div class="a" style="left:571.0px;top:158px;width:1px;height:30.5px;background:#d0d0d0"></div>
<div class="t" style="left:643.6px;top:162.7px;font-size:6.6px;color:#222;font-weight:400;transform:translateX(-100%)">Амортизация</div>
<div class="a" style="left:574.3px;top:174.2px;width:76.70000000000002px;height:13.3px;background:linear-gradient(#f6f8fa,#fff);border:1px solid #c8c8cc;border-top-color:#b4b6bb;box-shadow:inset 1px 0 0 #d8ecfa, inset -1px 0 0 #d8ecfa"></div>
<div class="a" style="left:653.6px;top:158px;width:1px;height:30.5px;background:#d0d0d0"></div>
<div class="t" style="left:658.3000000000001px;top:162.7px;font-size:6.6px;color:#222;font-weight:400;">Остаточная стоимо...</div>
<div class="a" style="left:656.9px;top:174.2px;width:76.1px;height:13.3px;background:linear-gradient(#f6f8fa,#fff);border:1px solid #c8c8cc;border-top-color:#b4b6bb;box-shadow:inset 1px 0 0 #d8ecfa, inset -1px 0 0 #d8ecfa"></div>
<div class="a" style="left:735.6px;top:158px;width:1px;height:30.5px;background:#d0d0d0"></div>
<div class="t" style="left:740.3000000000001px;top:162.7px;font-size:6.6px;color:#222;font-weight:400;">ОЛ</div>
<div class="a" style="left:738.9px;top:174.2px;width:76.49999999999997px;height:13.3px;background:linear-gradient(#f6f8fa,#fff);border:1px solid #c8c8cc;border-top-color:#b4b6bb;box-shadow:inset 1px 0 0 #d8ecfa, inset -1px 0 0 #d8ecfa"></div>
<div class="a" style="left:818.0px;top:158px;width:1px;height:30.5px;background:#d0d0d0"></div>
<div class="t" style="left:822.7px;top:162.7px;font-size:6.6px;color:#222;font-weight:400;">КФО</div>
<div class="a" style="left:821.3px;top:174.2px;width:76.1px;height:13.3px;background:linear-gradient(#f6f8fa,#fff);border:1px solid #c8c8cc;border-top-color:#b4b6bb;box-shadow:inset 1px 0 0 #d8ecfa, inset -1px 0 0 #d8ecfa"></div>
<div class="a" style="left:900.0px;top:158px;width:1px;height:30.5px;background:#d0d0d0"></div>
<div class="t" style="left:904.7px;top:162.7px;font-size:6.6px;color:#222;font-weight:400;">Счет</div>
<div class="a" style="left:903.3px;top:174.2px;width:75.80000000000004px;height:13.3px;background:linear-gradient(#f6f8fa,#fff);border:1px solid #c8c8cc;border-top-color:#b4b6bb;box-shadow:inset 1px 0 0 #d8ecfa, inset -1px 0 0 #d8ecfa"></div>
<div class="a" style="left:981.7px;top:158px;width:1px;height:30.5px;background:#d0d0d0"></div>
<div class="t" style="left:986.4000000000001px;top:162.7px;font-size:6.6px;color:#222;font-weight:400;">ИНОУ</div>
<div class="a" style="left:985.0px;top:174.2px;width:76.49999999999986px;height:13.3px;background:linear-gradient(#f6f8fa,#fff);border:1px solid #c8c8cc;border-top-color:#b4b6bb;box-shadow:inset 1px 0 0 #d8ecfa, inset -1px 0 0 #d8ecfa"></div>
<div class="a" style="left:1064.1px;top:158px;width:1px;height:30.5px;background:#d0d0d0"></div>
<div class="t" style="left:1068.8px;top:162.7px;font-size:6.6px;color:#222;font-weight:400;">Количество</div>
<div class="a" style="left:1067.3999999999999px;top:174.2px;width:76.50000000000009px;height:13.3px;background:linear-gradient(#f6f8fa,#fff);border:1px solid #c8c8cc;border-top-color:#b4b6bb;box-shadow:inset 1px 0 0 #d8ecfa, inset -1px 0 0 #d8ecfa"></div>
<div class="a" style="left:1147px;top:158px;width:1px;height:30.5px;background:#d0d0d0"></div>
<div class="a" style="left:0;top:187px;width:1158px;height:1.6px;background:#bccad5"></div>
<div class="a" style="left:0;top:140.3px;width:1px;height:463px;background:#ccd"></div>
<div class="a" style="left:1px;top:188.4px;width:1157px;height:415.1px;background:#fff"></div>
<div class="a" style="left:1px;top:188.4px;width:1146.5px;height:12.87px;background:#f7f7f7"></div>
<svg class="a" style="left:1.8px;top:189.1px" width="10" height="10" viewBox="0 0 10 10"><circle cx="5" cy="5" r="4.6" fill="url(#gg)"/><circle cx="5" cy="5" r="4.7" fill="none" stroke="#33b033" stroke-width="0.5"/><path d="M3.8 2.8 L6.6 5 L3.8 7.2 Z" fill="#333"/></svg>
<div class="t" style="left:13px;top:192.45px;font-size:6.67px;color:#111;font-weight:400;">AR-52- шкаф настенный с 2 распашными металлическими дверями, стеклянной полкой</div>
<div class="t" style="left:328.5px;top:192.45px;font-size:6.6px;color:#111;font-weight:400;">1013604114</div>
<div class="t" style="left:410.8px;top:192.45px;font-size:6.6px;color:#111;font-weight:400;">000000054745311</div>
<div class="t" style="left:569.0px;top:192.45px;font-size:6.6px;color:#111;font-weight:400;transform:translateX(-100%)">9 747,85</div>
<div class="t" style="left:651.6px;top:192.45px;font-size:6.6px;color:#111;font-weight:400;transform:translateX(-100%)">9 747,85</div>
<div class="t" style="left:733.6px;top:192.45px;font-size:6.6px;color:#111;font-weight:400;transform:translateX(-100%)">0,00</div>
<div class="t" style="left:740.5px;top:192.45px;font-size:6.6px;color:#111;font-weight:400;">Дубовик Наталья Шак...</div>
<div class="t" style="left:821.8px;top:192.45px;font-size:6.6px;color:#111;font-weight:400;">2</div>
<div class="t" style="left:903.8px;top:192.45px;font-size:6.6px;color:#111;font-weight:400;">10136</div>
<div class="t" style="left:985.5px;top:192.45px;font-size:6.6px;color:#111;font-weight:400;">54001266003203</div>
<div class="t" style="left:1067.8999999999999px;top:192.45px;font-size:6.6px;color:#111;font-weight:400;">1</div>
<div class="a" style="left:1px;top:201.27px;width:1146.5px;height:12.87px;background:#fcfcfd"></div>
<div class="a" style="left:1px;top:200.77px;width:1146.5px;height:1px;background:#ebebeb"></div>
<svg class="a" style="left:1.8px;top:201.97px" width="10" height="10" viewBox="0 0 10 10"><circle cx="5" cy="5" r="4.6" fill="url(#gg)"/><circle cx="5" cy="5" r="4.7" fill="none" stroke="#33b033" stroke-width="0.5"/><path d="M3.8 2.8 L6.6 5 L3.8 7.2 Z" fill="#333"/></svg>
<div class="t" style="left:13px;top:205.29999999999998px;font-size:6.67px;color:#111;font-weight:400;">AR-52- шкаф настенный с 2 распашными металлическими дверями, стеклянной полкой</div>
<div class="t" style="left:328.5px;top:205.29999999999998px;font-size:6.6px;color:#111;font-weight:400;">1013604113</div>
<div class="t" style="left:410.8px;top:205.29999999999998px;font-size:6.6px;color:#111;font-weight:400;">000000054745312</div>
<div class="t" style="left:569.0px;top:205.29999999999998px;font-size:6.6px;color:#111;font-weight:400;transform:translateX(-100%)">9 747,85</div>
<div class="t" style="left:651.6px;top:205.29999999999998px;font-size:6.6px;color:#111;font-weight:400;transform:translateX(-100%)">9 747,85</div>
<div class="t" style="left:733.6px;top:205.29999999999998px;font-size:6.6px;color:#111;font-weight:400;transform:translateX(-100%)">0,00</div>
<div class="t" style="left:740.5px;top:205.29999999999998px;font-size:6.6px;color:#111;font-weight:400;">Дубовик Наталья Шак...</div>
<div class="t" style="left:821.8px;top:205.29999999999998px;font-size:6.6px;color:#111;font-weight:400;">2</div>
<div class="t" style="left:903.8px;top:205.29999999999998px;font-size:6.6px;color:#111;font-weight:400;">10136</div>
<div class="t" style="left:985.5px;top:205.29999999999998px;font-size:6.6px;color:#111;font-weight:400;">54001266003202</div>
<div class="t" style="left:1067.8999999999999px;top:205.29999999999998px;font-size:6.6px;color:#111;font-weight:400;">1</div>
<div class="a" style="left:1px;top:214.14000000000001px;width:1146.5px;height:12.87px;background:#f7f7f7"></div>
<div class="a" style="left:1px;top:213.64000000000001px;width:1146.5px;height:1px;background:#ebebeb"></div>
<svg class="a" style="left:1.8px;top:214.84px" width="10" height="10" viewBox="0 0 10 10"><circle cx="5" cy="5" r="4.6" fill="url(#gg)"/><circle cx="5" cy="5" r="4.7" fill="none" stroke="#33b033" stroke-width="0.5"/><path d="M3.8 2.8 L6.6 5 L3.8 7.2 Z" fill="#333"/></svg>
<div class="t" style="left:13px;top:218.14999999999998px;font-size:6.67px;color:#111;font-weight:400;">AR-52- шкаф настенный с 2 распашными металлическими дверями, стеклянной полкой</div>
<div class="t" style="left:328.5px;top:218.14999999999998px;font-size:6.6px;color:#111;font-weight:400;">1013604115</div>
<div class="t" style="left:410.8px;top:218.14999999999998px;font-size:6.6px;color:#111;font-weight:400;">000000054745310</div>
<div class="t" style="left:569.0px;top:218.14999999999998px;font-size:6.6px;color:#111;font-weight:400;transform:translateX(-100%)">9 747,85</div>
<div class="t" style="left:651.6px;top:218.14999999999998px;font-size:6.6px;color:#111;font-weight:400;transform:translateX(-100%)">9 747,85</div>
<div class="t" style="left:733.6px;top:218.14999999999998px;font-size:6.6px;color:#111;font-weight:400;transform:translateX(-100%)">0,00</div>
<div class="t" style="left:740.5px;top:218.14999999999998px;font-size:6.6px;color:#111;font-weight:400;">Дубовик Наталья Шак...</div>
<div class="t" style="left:821.8px;top:218.14999999999998px;font-size:6.6px;color:#111;font-weight:400;">2</div>
<div class="t" style="left:903.8px;top:218.14999999999998px;font-size:6.6px;color:#111;font-weight:400;">10136</div>
<div class="t" style="left:985.5px;top:218.14999999999998px;font-size:6.6px;color:#111;font-weight:400;">54001266003204</div>
<div class="t" style="left:1067.8999999999999px;top:218.14999999999998px;font-size:6.6px;color:#111;font-weight:400;">1</div>
<div class="a" style="left:1px;top:227.01px;width:1146.5px;height:12.87px;background:#fcfcfd"></div>
<div class="a" style="left:1px;top:226.51px;width:1146.5px;height:1px;background:#ebebeb"></div>
<svg class="a" style="left:1.8px;top:227.70999999999998px" width="10" height="10" viewBox="0 0 10 10"><circle cx="5" cy="5" r="4.6" fill="url(#gg)"/><circle cx="5" cy="5" r="4.7" fill="none" stroke="#33b033" stroke-width="0.5"/><path d="M3.8 2.8 L6.6 5 L3.8 7.2 Z" fill="#333"/></svg>
<div class="t" style="left:13px;top:231.0px;font-size:6.67px;color:#111;font-weight:400;">AR-52- шкаф настенный с 2 распашными металлическими дверями, стеклянной полкой</div>
<div class="t" style="left:328.5px;top:231.0px;font-size:6.6px;color:#111;font-weight:400;">1013604116</div>
<div class="t" style="left:410.8px;top:231.0px;font-size:6.6px;color:#111;font-weight:400;">000000054745309</div>
<div class="t" style="left:569.0px;top:231.0px;font-size:6.6px;color:#111;font-weight:400;transform:translateX(-100%)">9 747,85</div>
<div class="t" style="left:651.6px;top:231.0px;font-size:6.6px;color:#111;font-weight:400;transform:translateX(-100%)">9 747,85</div>
<div class="t" style="left:733.6px;top:231.0px;font-size:6.6px;color:#111;font-weight:400;transform:translateX(-100%)">0,00</div>
<div class="t" style="left:740.5px;top:231.0px;font-size:6.6px;color:#111;font-weight:400;">Дубовик Наталья Шак...</div>
<div class="t" style="left:821.8px;top:231.0px;font-size:6.6px;color:#111;font-weight:400;">2</div>
<div class="t" style="left:903.8px;top:231.0px;font-size:6.6px;color:#111;font-weight:400;">10136</div>
<div class="t" style="left:985.5px;top:231.0px;font-size:6.6px;color:#111;font-weight:400;">54001266003205</div>
<div class="t" style="left:1067.8999999999999px;top:231.0px;font-size:6.6px;color:#111;font-weight:400;">1</div>
<div class="a" style="left:1px;top:239.88px;width:1146.5px;height:12.87px;background:#f7f7f7"></div>
<div class="a" style="left:1px;top:239.38px;width:1146.5px;height:1px;background:#ebebeb"></div>
<svg class="a" style="left:1.8px;top:240.57999999999998px" width="10" height="10" viewBox="0 0 10 10"><circle cx="5" cy="5" r="4.6" fill="url(#gg)"/><circle cx="5" cy="5" r="4.7" fill="none" stroke="#33b033" stroke-width="0.5"/><path d="M3.8 2.8 L6.6 5 L3.8 7.2 Z" fill="#333"/></svg>
<div class="t" style="left:13px;top:243.85px;font-size:6.67px;color:#111;font-weight:400;">AR-52- шкаф настенный с 2 распашными металлическими дверями, стеклянной полкой</div>
<div class="t" style="left:328.5px;top:243.85px;font-size:6.6px;color:#111;font-weight:400;">1013603786</div>
<div class="t" style="left:410.8px;top:243.85px;font-size:6.6px;color:#111;font-weight:400;">000000054744933</div>
<div class="t" style="left:569.0px;top:243.85px;font-size:6.6px;color:#111;font-weight:400;transform:translateX(-100%)">9 747,85</div>
<div class="t" style="left:651.6px;top:243.85px;font-size:6.6px;color:#111;font-weight:400;transform:translateX(-100%)">9 747,85</div>
<div class="t" style="left:733.6px;top:243.85px;font-size:6.6px;color:#111;font-weight:400;transform:translateX(-100%)">0,00</div>
<div class="t" style="left:740.5px;top:243.85px;font-size:6.6px;color:#111;font-weight:400;">Дубовик Наталья Шак...</div>
<div class="t" style="left:821.8px;top:243.85px;font-size:6.6px;color:#111;font-weight:400;">2</div>
<div class="t" style="left:903.8px;top:243.85px;font-size:6.6px;color:#111;font-weight:400;">10136</div>
<div class="t" style="left:985.5px;top:243.85px;font-size:6.6px;color:#111;font-weight:400;">54001266002862</div>
<div class="t" style="left:1067.8999999999999px;top:243.85px;font-size:6.6px;color:#111;font-weight:400;">1</div>
<div class="a" style="left:1px;top:252.75px;width:1146.5px;height:12.87px;background:#fcfcfd"></div>
<div class="a" style="left:1px;top:252.25px;width:1146.5px;height:1px;background:#ebebeb"></div>
<svg class="a" style="left:1.8px;top:253.45px" width="10" height="10" viewBox="0 0 10 10"><circle cx="5" cy="5" r="4.6" fill="url(#gg)"/><circle cx="5" cy="5" r="4.7" fill="none" stroke="#33b033" stroke-width="0.5"/><path d="M3.8 2.8 L6.6 5 L3.8 7.2 Z" fill="#333"/></svg>
<div class="t" style="left:13px;top:256.7px;font-size:6.67px;color:#111;font-weight:400;">AR-52- шкаф настенный с 2 распашными металлическими дверями, стеклянной полкой</div>
<div class="t" style="left:328.5px;top:256.7px;font-size:6.6px;color:#111;font-weight:400;">1013603779</div>
<div class="t" style="left:410.8px;top:256.7px;font-size:6.6px;color:#111;font-weight:400;">000000054744926</div>
<div class="t" style="left:569.0px;top:256.7px;font-size:6.6px;color:#111;font-weight:400;transform:translateX(-100%)">9 747,85</div>
<div class="t" style="left:651.6px;top:256.7px;font-size:6.6px;color:#111;font-weight:400;transform:translateX(-100%)">9 747,85</div>
<div class="t" style="left:733.6px;top:256.7px;font-size:6.6px;color:#111;font-weight:400;transform:translateX(-100%)">0,00</div>
<div class="t" style="left:740.5px;top:256.7px;font-size:6.6px;color:#111;font-weight:400;">Евсюкова Мария Серг...</div>
<div class="t" style="left:821.8px;top:256.7px;font-size:6.6px;color:#111;font-weight:400;">2</div>
<div class="t" style="left:903.8px;top:256.7px;font-size:6.6px;color:#111;font-weight:400;">10136</div>
<div class="t" style="left:985.5px;top:256.7px;font-size:6.6px;color:#111;font-weight:400;">54001266002849</div>
<div class="t" style="left:1067.8999999999999px;top:256.7px;font-size:6.6px;color:#111;font-weight:400;">1</div>
<div class="a" style="left:1px;top:265.62px;width:1146.5px;height:12.87px;background:#f7f7f7"></div>
<div class="a" style="left:1px;top:265.12px;width:1146.5px;height:1px;background:#ebebeb"></div>
<svg class="a" style="left:1.8px;top:266.32px" width="10" height="10" viewBox="0 0 10 10"><circle cx="5" cy="5" r="4.6" fill="url(#gg)"/><circle cx="5" cy="5" r="4.7" fill="none" stroke="#33b033" stroke-width="0.5"/><path d="M3.8 2.8 L6.6 5 L3.8 7.2 Z" fill="#333"/></svg>
<div class="t" style="left:13px;top:269.54999999999995px;font-size:6.67px;color:#111;font-weight:400;">AR-52- шкаф настенный с 2 распашными металлическими дверями, стеклянной полкой</div>
<div class="t" style="left:328.5px;top:269.54999999999995px;font-size:6.6px;color:#111;font-weight:400;">1013603778</div>
<div class="t" style="left:410.8px;top:269.54999999999995px;font-size:6.6px;color:#111;font-weight:400;">000000054744925</div>
<div class="t" style="left:569.0px;top:269.54999999999995px;font-size:6.6px;color:#111;font-weight:400;transform:translateX(-100%)">9 747,85</div>
<div class="t" style="left:651.6px;top:269.54999999999995px;font-size:6.6px;color:#111;font-weight:400;transform:translateX(-100%)">9 747,85</div>
<div class="t" style="left:733.6px;top:269.54999999999995px;font-size:6.6px;color:#111;font-weight:400;transform:translateX(-100%)">0,00</div>
<div class="t" style="left:740.5px;top:269.54999999999995px;font-size:6.6px;color:#111;font-weight:400;">Евсюкова Мария Серг...</div>
<div class="t" style="left:821.8px;top:269.54999999999995px;font-size:6.6px;color:#111;font-weight:400;">2</div>
<div class="t" style="left:903.8px;top:269.54999999999995px;font-size:6.6px;color:#111;font-weight:400;">10136</div>
<div class="t" style="left:985.5px;top:269.54999999999995px;font-size:6.6px;color:#111;font-weight:400;">54001266002850</div>
<div class="t" style="left:1067.8999999999999px;top:269.54999999999995px;font-size:6.6px;color:#111;font-weight:400;">1</div>
<div class="a" style="left:1px;top:278.49px;width:1146.5px;height:12.87px;background:#fcfcfd"></div>
<div class="a" style="left:1px;top:277.99px;width:1146.5px;height:1px;background:#ebebeb"></div>
<svg class="a" style="left:1.8px;top:279.19px" width="10" height="10" viewBox="0 0 10 10"><circle cx="5" cy="5" r="4.6" fill="url(#gg)"/><circle cx="5" cy="5" r="4.7" fill="none" stroke="#33b033" stroke-width="0.5"/><path d="M3.8 2.8 L6.6 5 L3.8 7.2 Z" fill="#333"/></svg>
<div class="t" style="left:13px;top:282.4px;font-size:6.67px;color:#111;font-weight:400;">AR-52- шкаф настенный с 2 распашными металлическими дверями, стеклянной полкой</div>
<div class="t" style="left:328.5px;top:282.4px;font-size:6.6px;color:#111;font-weight:400;">1013603777</div>
<div class="t" style="left:410.8px;top:282.4px;font-size:6.6px;color:#111;font-weight:400;">000000054744924</div>
<div class="t" style="left:569.0px;top:282.4px;font-size:6.6px;color:#111;font-weight:400;transform:translateX(-100%)">9 747,85</div>
<div class="t" style="left:651.6px;top:282.4px;font-size:6.6px;color:#111;font-weight:400;transform:translateX(-100%)">9 747,85</div>
<div class="t" style="left:733.6px;top:282.4px;font-size:6.6px;color:#111;font-weight:400;transform:translateX(-100%)">0,00</div>
<div class="t" style="left:740.5px;top:282.4px;font-size:6.6px;color:#111;font-weight:400;">Евсюкова Мария Серг...</div>
<div class="t" style="left:821.8px;top:282.4px;font-size:6.6px;color:#111;font-weight:400;">2</div>
<div class="t" style="left:903.8px;top:282.4px;font-size:6.6px;color:#111;font-weight:400;">10136</div>
<div class="t" style="left:985.5px;top:282.4px;font-size:6.6px;color:#111;font-weight:400;">54001266002851</div>
<div class="t" style="left:1067.8999999999999px;top:282.4px;font-size:6.6px;color:#111;font-weight:400;">1</div>
<div class="a" style="left:1px;top:291.36px;width:1146.5px;height:12.87px;background:#f7f7f7"></div>
<div class="a" style="left:1px;top:290.86px;width:1146.5px;height:1px;background:#ebebeb"></div>
<svg class="a" style="left:1.8px;top:292.06px" width="10" height="10" viewBox="0 0 10 10"><circle cx="5" cy="5" r="4.6" fill="url(#gg)"/><circle cx="5" cy="5" r="4.7" fill="none" stroke="#33b033" stroke-width="0.5"/><path d="M3.8 2.8 L6.6 5 L3.8 7.2 Z" fill="#333"/></svg>
<div class="t" style="left:13px;top:295.25px;font-size:6.67px;color:#111;font-weight:400;">AR-52- шкаф настенный с 2 распашными металлическими дверями, стеклянной полкой</div>
<div class="t" style="left:328.5px;top:295.25px;font-size:6.6px;color:#111;font-weight:400;">1013603776</div>
<div class="t" style="left:410.8px;top:295.25px;font-size:6.6px;color:#111;font-weight:400;">000000054744923</div>
<div class="t" style="left:569.0px;top:295.25px;font-size:6.6px;color:#111;font-weight:400;transform:translateX(-100%)">9 747,85</div>
<div class="t" style="left:651.6px;top:295.25px;font-size:6.6px;color:#111;font-weight:400;transform:translateX(-100%)">9 747,85</div>
<div class="t" style="left:733.6px;top:295.25px;font-size:6.6px;color:#111;font-weight:400;transform:translateX(-100%)">0,00</div>
<div class="t" style="left:740.5px;top:295.25px;font-size:6.6px;color:#111;font-weight:400;">Евсюкова Мария Серг...</div>
<div class="t" style="left:821.8px;top:295.25px;font-size:6.6px;color:#111;font-weight:400;">2</div>
<div class="t" style="left:903.8px;top:295.25px;font-size:6.6px;color:#111;font-weight:400;">10136</div>
<div class="t" style="left:985.5px;top:295.25px;font-size:6.6px;color:#111;font-weight:400;">54001266002852</div>
<div class="t" style="left:1067.8999999999999px;top:295.25px;font-size:6.6px;color:#111;font-weight:400;">1</div>
<div class="a" style="left:1px;top:304.23px;width:1146.5px;height:12.87px;background:#fcfcfd"></div>
<div class="a" style="left:1px;top:303.73px;width:1146.5px;height:1px;background:#ebebeb"></div>
<svg class="a" style="left:1.8px;top:304.93px" width="10" height="10" viewBox="0 0 10 10"><circle cx="5" cy="5" r="4.6" fill="url(#gg)"/><circle cx="5" cy="5" r="4.7" fill="none" stroke="#33b033" stroke-width="0.5"/><path d="M3.8 2.8 L6.6 5 L3.8 7.2 Z" fill="#333"/></svg>
<div class="t" style="left:13px;top:308.09999999999997px;font-size:6.67px;color:#111;font-weight:400;">AR-52- шкаф настенный с 2 распашными металлическими дверями, стеклянной полкой</div>
<div class="t" style="left:328.5px;top:308.09999999999997px;font-size:6.6px;color:#111;font-weight:400;">1013603775</div>
<div class="t" style="left:410.8px;top:308.09999999999997px;font-size:6.6px;color:#111;font-weight:400;">000000054744922</div>
<div class="t" style="left:569.0px;top:308.09999999999997px;font-size:6.6px;color:#111;font-weight:400;transform:translateX(-100%)">9 747,85</div>
<div class="t" style="left:651.6px;top:308.09999999999997px;font-size:6.6px;color:#111;font-weight:400;transform:translateX(-100%)">9 747,85</div>
<div class="t" style="left:733.6px;top:308.09999999999997px;font-size:6.6px;color:#111;font-weight:400;transform:translateX(-100%)">0,00</div>
<div class="t" style="left:740.5px;top:308.09999999999997px;font-size:6.6px;color:#111;font-weight:400;">Евсюкова Мария Серг...</div>
<div class="t" style="left:821.8px;top:308.09999999999997px;font-size:6.6px;color:#111;font-weight:400;">2</div>
<div class="t" style="left:903.8px;top:308.09999999999997px;font-size:6.6px;color:#111;font-weight:400;">10136</div>
<div class="t" style="left:985.5px;top:308.09999999999997px;font-size:6.6px;color:#111;font-weight:400;">54001266002853</div>
<div class="t" style="left:1067.8999999999999px;top:308.09999999999997px;font-size:6.6px;color:#111;font-weight:400;">1</div>
<div class="a" style="left:1px;top:317.1px;width:1146.5px;height:12.87px;background:#f7f7f7"></div>
<div class="a" style="left:1px;top:316.6px;width:1146.5px;height:1px;background:#ebebeb"></div>
<svg class="a" style="left:1.8px;top:317.8px" width="10" height="10" viewBox="0 0 10 10"><circle cx="5" cy="5" r="4.6" fill="url(#gg)"/><circle cx="5" cy="5" r="4.7" fill="none" stroke="#33b033" stroke-width="0.5"/><path d="M3.8 2.8 L6.6 5 L3.8 7.2 Z" fill="#333"/></svg>
<div class="t" style="left:13px;top:320.95px;font-size:6.67px;color:#111;font-weight:400;">AR-52- шкаф настенный с 2 распашными металлическими дверями, стеклянной полкой</div>
<div class="t" style="left:328.5px;top:320.95px;font-size:6.6px;color:#111;font-weight:400;">1013603774</div>
<div class="t" style="left:410.8px;top:320.95px;font-size:6.6px;color:#111;font-weight:400;">000000054744921</div>
<div class="t" style="left:569.0px;top:320.95px;font-size:6.6px;color:#111;font-weight:400;transform:translateX(-100%)">9 747,85</div>
<div class="t" style="left:651.6px;top:320.95px;font-size:6.6px;color:#111;font-weight:400;transform:translateX(-100%)">9 747,85</div>
<div class="t" style="left:733.6px;top:320.95px;font-size:6.6px;color:#111;font-weight:400;transform:translateX(-100%)">0,00</div>
<div class="t" style="left:740.5px;top:320.95px;font-size:6.6px;color:#111;font-weight:400;">Евсюкова Мария Серг...</div>
<div class="t" style="left:821.8px;top:320.95px;font-size:6.6px;color:#111;font-weight:400;">2</div>
<div class="t" style="left:903.8px;top:320.95px;font-size:6.6px;color:#111;font-weight:400;">10136</div>
<div class="t" style="left:985.5px;top:320.95px;font-size:6.6px;color:#111;font-weight:400;">54001266002854</div>
<div class="t" style="left:1067.8999999999999px;top:320.95px;font-size:6.6px;color:#111;font-weight:400;">1</div>
<div class="a" style="left:1px;top:329.97px;width:1146.5px;height:12.87px;background:#fcfcfd"></div>
<div class="a" style="left:1px;top:329.47px;width:1146.5px;height:1px;background:#ebebeb"></div>
<svg class="a" style="left:1.8px;top:330.67px" width="10" height="10" viewBox="0 0 10 10"><circle cx="5" cy="5" r="4.6" fill="url(#gg)"/><circle cx="5" cy="5" r="4.7" fill="none" stroke="#33b033" stroke-width="0.5"/><path d="M3.8 2.8 L6.6 5 L3.8 7.2 Z" fill="#333"/></svg>
<div class="t" style="left:13px;top:333.79999999999995px;font-size:6.67px;color:#111;font-weight:400;">AR-52- шкаф настенный с 2 распашными металлическими дверями, стеклянной полкой</div>
<div class="t" style="left:328.5px;top:333.79999999999995px;font-size:6.6px;color:#111;font-weight:400;">1013603773</div>
<div class="t" style="left:410.8px;top:333.79999999999995px;font-size:6.6px;color:#111;font-weight:400;">000000054744920</div>
<div class="t" style="left:569.0px;top:333.79999999999995px;font-size:6.6px;color:#111;font-weight:400;transform:translateX(-100%)">9 747,85</div>
<div class="t" style="left:651.6px;top:333.79999999999995px;font-size:6.6px;color:#111;font-weight:400;transform:translateX(-100%)">9 747,85</div>
<div class="t" style="left:733.6px;top:333.79999999999995px;font-size:6.6px;color:#111;font-weight:400;transform:translateX(-100%)">0,00</div>
<div class="t" style="left:740.5px;top:333.79999999999995px;font-size:6.6px;color:#111;font-weight:400;">Евсюкова Мария Серг...</div>
<div class="t" style="left:821.8px;top:333.79999999999995px;font-size:6.6px;color:#111;font-weight:400;">2</div>
<div class="t" style="left:903.8px;top:333.79999999999995px;font-size:6.6px;color:#111;font-weight:400;">10136</div>
<div class="t" style="left:985.5px;top:333.79999999999995px;font-size:6.6px;color:#111;font-weight:400;">54001266002855</div>
<div class="t" style="left:1067.8999999999999px;top:333.79999999999995px;font-size:6.6px;color:#111;font-weight:400;">1</div>
<div class="a" style="left:1px;top:342.84000000000003px;width:1146.5px;height:12.87px;background:#f7f7f7"></div>
<div class="a" style="left:1px;top:342.34000000000003px;width:1146.5px;height:1px;background:#ebebeb"></div>
<svg class="a" style="left:1.8px;top:343.54px" width="10" height="10" viewBox="0 0 10 10"><circle cx="5" cy="5" r="4.6" fill="url(#gg)"/><circle cx="5" cy="5" r="4.7" fill="none" stroke="#33b033" stroke-width="0.5"/><path d="M3.8 2.8 L6.6 5 L3.8 7.2 Z" fill="#333"/></svg>
<div class="t" style="left:13px;top:346.65px;font-size:6.67px;color:#111;font-weight:400;">AR-52- шкаф настенный с 2 распашными металлическими дверями, стеклянной полкой</div>
<div class="t" style="left:328.5px;top:346.65px;font-size:6.6px;color:#111;font-weight:400;">1013603772</div>
<div class="t" style="left:410.8px;top:346.65px;font-size:6.6px;color:#111;font-weight:400;">000000054744919</div>
<div class="t" style="left:569.0px;top:346.65px;font-size:6.6px;color:#111;font-weight:400;transform:translateX(-100%)">9 747,85</div>
<div class="t" style="left:651.6px;top:346.65px;font-size:6.6px;color:#111;font-weight:400;transform:translateX(-100%)">9 747,85</div>
<div class="t" style="left:733.6px;top:346.65px;font-size:6.6px;color:#111;font-weight:400;transform:translateX(-100%)">0,00</div>
<div class="t" style="left:740.5px;top:346.65px;font-size:6.6px;color:#111;font-weight:400;">Евсюкова Мария Серг...</div>
<div class="t" style="left:821.8px;top:346.65px;font-size:6.6px;color:#111;font-weight:400;">2</div>
<div class="t" style="left:903.8px;top:346.65px;font-size:6.6px;color:#111;font-weight:400;">10136</div>
<div class="t" style="left:985.5px;top:346.65px;font-size:6.6px;color:#111;font-weight:400;">54001266002856</div>
<div class="t" style="left:1067.8999999999999px;top:346.65px;font-size:6.6px;color:#111;font-weight:400;">1</div>
<div class="a" style="left:1px;top:355.71000000000004px;width:1146.5px;height:12.87px;background:#fcfcfd"></div>
<div class="a" style="left:1px;top:355.21000000000004px;width:1146.5px;height:1px;background:#ebebeb"></div>
<svg class="a" style="left:1.8px;top:356.41px" width="10" height="10" viewBox="0 0 10 10"><circle cx="5" cy="5" r="4.6" fill="url(#gg)"/><circle cx="5" cy="5" r="4.7" fill="none" stroke="#33b033" stroke-width="0.5"/><path d="M3.8 2.8 L6.6 5 L3.8 7.2 Z" fill="#333"/></svg>
<div class="t" style="left:13px;top:359.5px;font-size:6.67px;color:#111;font-weight:400;">AR-52- шкаф настенный с 2 распашными металлическими дверями, стеклянной полкой</div>
<div class="t" style="left:328.5px;top:359.5px;font-size:6.6px;color:#111;font-weight:400;">1013603771</div>
<div class="t" style="left:410.8px;top:359.5px;font-size:6.6px;color:#111;font-weight:400;">000000054744918</div>
<div class="t" style="left:569.0px;top:359.5px;font-size:6.6px;color:#111;font-weight:400;transform:translateX(-100%)">9 747,85</div>
<div class="t" style="left:651.6px;top:359.5px;font-size:6.6px;color:#111;font-weight:400;transform:translateX(-100%)">9 747,85</div>
<div class="t" style="left:733.6px;top:359.5px;font-size:6.6px;color:#111;font-weight:400;transform:translateX(-100%)">0,00</div>
<div class="t" style="left:740.5px;top:359.5px;font-size:6.6px;color:#111;font-weight:400;">Евсюкова Мария Серг...</div>
<div class="t" style="left:821.8px;top:359.5px;font-size:6.6px;color:#111;font-weight:400;">2</div>
<div class="t" style="left:903.8px;top:359.5px;font-size:6.6px;color:#111;font-weight:400;">10136</div>
<div class="t" style="left:985.5px;top:359.5px;font-size:6.6px;color:#111;font-weight:400;">54001266002857</div>
<div class="t" style="left:1067.8999999999999px;top:359.5px;font-size:6.6px;color:#111;font-weight:400;">1</div>
<div class="a" style="left:1px;top:368.58px;width:1146.5px;height:12.87px;background:#f7f7f7"></div>
<div class="a" style="left:1px;top:368.08px;width:1146.5px;height:1px;background:#ebebeb"></div>
<svg class="a" style="left:1.8px;top:369.28px" width="10" height="10" viewBox="0 0 10 10"><circle cx="5" cy="5" r="4.6" fill="url(#gg)"/><circle cx="5" cy="5" r="4.7" fill="none" stroke="#33b033" stroke-width="0.5"/><path d="M3.8 2.8 L6.6 5 L3.8 7.2 Z" fill="#333"/></svg>
<div class="t" style="left:13px;top:372.35px;font-size:6.67px;color:#111;font-weight:400;">AR-52- шкаф настенный с 2 распашными металлическими дверями, стеклянной полкой</div>
<div class="t" style="left:328.5px;top:372.35px;font-size:6.6px;color:#111;font-weight:400;">1013603770</div>
<div class="t" style="left:410.8px;top:372.35px;font-size:6.6px;color:#111;font-weight:400;">000000054744917</div>
<div class="t" style="left:569.0px;top:372.35px;font-size:6.6px;color:#111;font-weight:400;transform:translateX(-100%)">9 747,85</div>
<div class="t" style="left:651.6px;top:372.35px;font-size:6.6px;color:#111;font-weight:400;transform:translateX(-100%)">9 747,85</div>
<div class="t" style="left:733.6px;top:372.35px;font-size:6.6px;color:#111;font-weight:400;transform:translateX(-100%)">0,00</div>
<div class="t" style="left:740.5px;top:372.35px;font-size:6.6px;color:#111;font-weight:400;">Евсюкова Мария Серг...</div>
<div class="t" style="left:821.8px;top:372.35px;font-size:6.6px;color:#111;font-weight:400;">2</div>
<div class="t" style="left:903.8px;top:372.35px;font-size:6.6px;color:#111;font-weight:400;">10136</div>
<div class="t" style="left:985.5px;top:372.35px;font-size:6.6px;color:#111;font-weight:400;">54001266002858</div>
<div class="t" style="left:1067.8999999999999px;top:372.35px;font-size:6.6px;color:#111;font-weight:400;">1</div>
<div class="a" style="left:1px;top:381.45px;width:1146.5px;height:12.87px;background:#fcfcfd"></div>
<div class="a" style="left:1px;top:380.95px;width:1146.5px;height:1px;background:#ebebeb"></div>
<svg class="a" style="left:1.8px;top:382.15px" width="10" height="10" viewBox="0 0 10 10"><circle cx="5" cy="5" r="4.6" fill="url(#gg)"/><circle cx="5" cy="5" r="4.7" fill="none" stroke="#33b033" stroke-width="0.5"/><path d="M3.8 2.8 L6.6 5 L3.8 7.2 Z" fill="#333"/></svg>
<div class="t" style="left:13px;top:385.2px;font-size:6.67px;color:#111;font-weight:400;">AR-52- шкаф настенный с 2 распашными металлическими дверями, стеклянной полкой</div>
<div class="t" style="left:328.5px;top:385.2px;font-size:6.6px;color:#111;font-weight:400;">1013604103</div>
<div class="t" style="left:410.8px;top:385.2px;font-size:6.6px;color:#111;font-weight:400;">000000054745322</div>
<div class="t" style="left:569.0px;top:385.2px;font-size:6.6px;color:#111;font-weight:400;transform:translateX(-100%)">9 747,85</div>
<div class="t" style="left:651.6px;top:385.2px;font-size:6.6px;color:#111;font-weight:400;transform:translateX(-100%)">9 747,85</div>
<div class="t" style="left:733.6px;top:385.2px;font-size:6.6px;color:#111;font-weight:400;transform:translateX(-100%)">0,00</div>
<div class="t" style="left:740.5px;top:385.2px;font-size:6.6px;color:#111;font-weight:400;">Евсюкова Мария Серг...</div>
<div class="t" style="left:821.8px;top:385.2px;font-size:6.6px;color:#111;font-weight:400;">2</div>
<div class="t" style="left:903.8px;top:385.2px;font-size:6.6px;color:#111;font-weight:400;">10136</div>
<div class="t" style="left:985.5px;top:385.2px;font-size:6.6px;color:#111;font-weight:400;">54001266003192</div>
<div class="t" style="left:1067.8999999999999px;top:385.2px;font-size:6.6px;color:#111;font-weight:400;">1</div>
<div class="a" style="left:1px;top:394.32px;width:1146.5px;height:12.87px;background:#f7f7f7"></div>
<div class="a" style="left:1px;top:393.82px;width:1146.5px;height:1px;background:#ebebeb"></div>
<svg class="a" style="left:1.8px;top:395.02px" width="10" height="10" viewBox="0 0 10 10"><circle cx="5" cy="5" r="4.6" fill="url(#gg)"/><circle cx="5" cy="5" r="4.7" fill="none" stroke="#33b033" stroke-width="0.5"/><path d="M3.8 2.8 L6.6 5 L3.8 7.2 Z" fill="#333"/></svg>
<div class="t" style="left:13px;top:398.04999999999995px;font-size:6.67px;color:#111;font-weight:400;">AR-52- шкаф настенный с 2 распашными металлическими дверями, стеклянной полкой</div>
<div class="t" style="left:328.5px;top:398.04999999999995px;font-size:6.6px;color:#111;font-weight:400;">1013604104</div>
<div class="t" style="left:410.8px;top:398.04999999999995px;font-size:6.6px;color:#111;font-weight:400;">000000054745321</div>
<div class="t" style="left:569.0px;top:398.04999999999995px;font-size:6.6px;color:#111;font-weight:400;transform:translateX(-100%)">9 747,85</div>
<div class="t" style="left:651.6px;top:398.04999999999995px;font-size:6.6px;color:#111;font-weight:400;transform:translateX(-100%)">9 747,85</div>
<div class="t" style="left:733.6px;top:398.04999999999995px;font-size:6.6px;color:#111;font-weight:400;transform:translateX(-100%)">0,00</div>
<div class="t" style="left:740.5px;top:398.04999999999995px;font-size:6.6px;color:#111;font-weight:400;">Евсюкова Мария Серг...</div>
<div class="t" style="left:821.8px;top:398.04999999999995px;font-size:6.6px;color:#111;font-weight:400;">2</div>
<div class="t" style="left:903.8px;top:398.04999999999995px;font-size:6.6px;color:#111;font-weight:400;">10136</div>
<div class="t" style="left:985.5px;top:398.04999999999995px;font-size:6.6px;color:#111;font-weight:400;">54001266003193</div>
<div class="t" style="left:1067.8999999999999px;top:398.04999999999995px;font-size:6.6px;color:#111;font-weight:400;">1</div>
<div class="a" style="left:1px;top:407.19px;width:1146.5px;height:12.87px;background:#fcfcfd"></div>
<div class="a" style="left:1px;top:406.69px;width:1146.5px;height:1px;background:#ebebeb"></div>
<svg class="a" style="left:1.8px;top:407.89px" width="10" height="10" viewBox="0 0 10 10"><circle cx="5" cy="5" r="4.6" fill="url(#gg)"/><circle cx="5" cy="5" r="4.7" fill="none" stroke="#33b033" stroke-width="0.5"/><path d="M3.8 2.8 L6.6 5 L3.8 7.2 Z" fill="#333"/></svg>
<div class="t" style="left:13px;top:410.9px;font-size:6.67px;color:#111;font-weight:400;">AR-52- шкаф настенный с 2 распашными металлическими дверями, стеклянной полкой</div>
<div class="t" style="left:328.5px;top:410.9px;font-size:6.6px;color:#111;font-weight:400;">1013604105</div>
<div class="t" style="left:410.8px;top:410.9px;font-size:6.6px;color:#111;font-weight:400;">000000054745320</div>
<div class="t" style="left:569.0px;top:410.9px;font-size:6.6px;color:#111;font-weight:400;transform:translateX(-100%)">9 747,85</div>
<div class="t" style="left:651.6px;top:410.9px;font-size:6.6px;color:#111;font-weight:400;transform:translateX(-100%)">9 747,85</div>
<div class="t" style="left:733.6px;top:410.9px;font-size:6.6px;color:#111;font-weight:400;transform:translateX(-100%)">0,00</div>
<div class="t" style="left:740.5px;top:410.9px;font-size:6.6px;color:#111;font-weight:400;">Евсюкова Мария Серг...</div>
<div class="t" style="left:821.8px;top:410.9px;font-size:6.6px;color:#111;font-weight:400;">2</div>
<div class="t" style="left:903.8px;top:410.9px;font-size:6.6px;color:#111;font-weight:400;">10136</div>
<div class="t" style="left:985.5px;top:410.9px;font-size:6.6px;color:#111;font-weight:400;">54001266003194</div>
<div class="t" style="left:1067.8999999999999px;top:410.9px;font-size:6.6px;color:#111;font-weight:400;">1</div>
<div class="a" style="left:1px;top:420.06px;width:1146.5px;height:12.87px;background:#f7f7f7"></div>
<div class="a" style="left:1px;top:419.56px;width:1146.5px;height:1px;background:#ebebeb"></div>
<svg class="a" style="left:1.8px;top:420.76px" width="10" height="10" viewBox="0 0 10 10"><circle cx="5" cy="5" r="4.6" fill="url(#gg)"/><circle cx="5" cy="5" r="4.7" fill="none" stroke="#33b033" stroke-width="0.5"/><path d="M3.8 2.8 L6.6 5 L3.8 7.2 Z" fill="#333"/></svg>
<div class="t" style="left:13px;top:423.75px;font-size:6.67px;color:#111;font-weight:400;">AR-52- шкаф настенный с 2 распашными металлическими дверями, стеклянной полкой</div>
<div class="t" style="left:328.5px;top:423.75px;font-size:6.6px;color:#111;font-weight:400;">1013604107</div>
<div class="t" style="left:410.8px;top:423.75px;font-size:6.6px;color:#111;font-weight:400;">000000054745318</div>
<div class="t" style="left:569.0px;top:423.75px;font-size:6.6px;color:#111;font-weight:400;transform:translateX(-100%)">9 747,85</div>
<div class="t" style="left:651.6px;top:423.75px;font-size:6.6px;color:#111;font-weight:400;transform:translateX(-100%)">9 747,85</div>
<div class="t" style="left:733.6px;top:423.75px;font-size:6.6px;color:#111;font-weight:400;transform:translateX(-100%)">0,00</div>
<div class="t" style="left:740.5px;top:423.75px;font-size:6.6px;color:#111;font-weight:400;">Евсюкова Мария Серг...</div>
<div class="t" style="left:821.8px;top:423.75px;font-size:6.6px;color:#111;font-weight:400;">2</div>
<div class="t" style="left:903.8px;top:423.75px;font-size:6.6px;color:#111;font-weight:400;">10136</div>
<div class="t" style="left:985.5px;top:423.75px;font-size:6.6px;color:#111;font-weight:400;">54001266003196</div>
<div class="t" style="left:1067.8999999999999px;top:423.75px;font-size:6.6px;color:#111;font-weight:400;">1</div>
<div class="a" style="left:1px;top:432.92999999999995px;width:1146.5px;height:12.87px;background:#fcfcfd"></div>
<div class="a" style="left:1px;top:432.42999999999995px;width:1146.5px;height:1px;background:#ebebeb"></div>
<svg class="a" style="left:1.8px;top:433.62999999999994px" width="10" height="10" viewBox="0 0 10 10"><circle cx="5" cy="5" r="4.6" fill="url(#gg)"/><circle cx="5" cy="5" r="4.7" fill="none" stroke="#33b033" stroke-width="0.5"/><path d="M3.8 2.8 L6.6 5 L3.8 7.2 Z" fill="#333"/></svg>
<div class="t" style="left:13px;top:436.6px;font-size:6.67px;color:#111;font-weight:400;">AR-52- шкаф настенный с 2 распашными металлическими дверями, стеклянной полкой</div>
<div class="t" style="left:328.5px;top:436.6px;font-size:6.6px;color:#111;font-weight:400;">1013604109</div>
<div class="t" style="left:410.8px;top:436.6px;font-size:6.6px;color:#111;font-weight:400;">000000054745316</div>
<div class="t" style="left:569.0px;top:436.6px;font-size:6.6px;color:#111;font-weight:400;transform:translateX(-100%)">9 747,85</div>
<div class="t" style="left:651.6px;top:436.6px;font-size:6.6px;color:#111;font-weight:400;transform:translateX(-100%)">9 747,85</div>
<div class="t" style="left:733.6px;top:436.6px;font-size:6.6px;color:#111;font-weight:400;transform:translateX(-100%)">0,00</div>
<div class="t" style="left:740.5px;top:436.6px;font-size:6.6px;color:#111;font-weight:400;">Левина Светлана Ник...</div>
<div class="t" style="left:821.8px;top:436.6px;font-size:6.6px;color:#111;font-weight:400;">2</div>
<div class="t" style="left:903.8px;top:436.6px;font-size:6.6px;color:#111;font-weight:400;">10136</div>
<div class="t" style="left:985.5px;top:436.6px;font-size:6.6px;color:#111;font-weight:400;">54001266003198</div>
<div class="t" style="left:1067.8999999999999px;top:436.6px;font-size:6.6px;color:#111;font-weight:400;">1</div>
<div class="a" style="left:1px;top:445.79999999999995px;width:1146.5px;height:12.87px;background:linear-gradient(#f4f7fb,#e9eff7)"></div>
<div class="a" style="left:1px;top:445.29999999999995px;width:1146.5px;height:1px;background:#ebebeb"></div>
<svg class="a" style="left:1.8px;top:446.49999999999994px" width="10" height="10" viewBox="0 0 10 10"><circle cx="5" cy="5" r="4.6" fill="url(#gg)"/><circle cx="5" cy="5" r="4.7" fill="none" stroke="#33b033" stroke-width="0.5"/><path d="M3.8 2.8 L6.6 5 L3.8 7.2 Z" fill="#333"/></svg>
<div class="t" style="left:13px;top:449.45px;font-size:6.67px;color:#111;font-weight:400;">AR-52- шкаф настенный с 2 распашными металлическими дверями, стеклянной полкой</div>
<div class="t" style="left:328.5px;top:449.45px;font-size:6.6px;color:#111;font-weight:400;">1013604111</div>
<div class="t" style="left:410.8px;top:449.45px;font-size:6.6px;color:#111;font-weight:400;">000000054745314</div>
<div class="t" style="left:569.0px;top:449.45px;font-size:6.6px;color:#111;font-weight:400;transform:translateX(-100%)">9 747,85</div>
<div class="t" style="left:651.6px;top:449.45px;font-size:6.6px;color:#111;font-weight:400;transform:translateX(-100%)">9 747,85</div>
<div class="t" style="left:733.6px;top:449.45px;font-size:6.6px;color:#111;font-weight:400;transform:translateX(-100%)">0,00</div>
<div class="t" style="left:740.5px;top:449.45px;font-size:6.6px;color:#111;font-weight:400;">Левина Светлана Ник...</div>
<div class="t" style="left:821.8px;top:449.45px;font-size:6.6px;color:#111;font-weight:400;">2</div>
<div class="t" style="left:903.8px;top:449.45px;font-size:6.6px;color:#111;font-weight:400;">10136</div>
<div class="t" style="left:985.5px;top:449.45px;font-size:6.6px;color:#111;font-weight:400;">54001266003200</div>
<div class="t" style="left:1067.8999999999999px;top:449.45px;font-size:6.6px;color:#111;font-weight:400;">1</div>
<div class="a" style="left:1px;top:458.66999999999996px;width:1146.5px;height:12.87px;background:#fcfcfd"></div>
<div class="a" style="left:1px;top:458.16999999999996px;width:1146.5px;height:1px;background:#ebebeb"></div>
<svg class="a" style="left:1.8px;top:459.36999999999995px" width="10" height="10" viewBox="0 0 10 10"><circle cx="5" cy="5" r="4.6" fill="url(#gg)"/><circle cx="5" cy="5" r="4.7" fill="none" stroke="#33b033" stroke-width="0.5"/><path d="M3.8 2.8 L6.6 5 L3.8 7.2 Z" fill="#333"/></svg>
<div class="t" style="left:13px;top:462.29999999999995px;font-size:6.67px;color:#111;font-weight:400;">AR-52- шкаф настенный с 2 распашными металлическими дверями, стеклянной полкой</div>
<div class="t" style="left:328.5px;top:462.29999999999995px;font-size:6.6px;color:#111;font-weight:400;">1013604106</div>
<div class="t" style="left:410.8px;top:462.29999999999995px;font-size:6.6px;color:#111;font-weight:400;">000000054745319</div>
<div class="t" style="left:569.0px;top:462.29999999999995px;font-size:6.6px;color:#111;font-weight:400;transform:translateX(-100%)">9 747,85</div>
<div class="t" style="left:651.6px;top:462.29999999999995px;font-size:6.6px;color:#111;font-weight:400;transform:translateX(-100%)">9 747,85</div>
<div class="t" style="left:733.6px;top:462.29999999999995px;font-size:6.6px;color:#111;font-weight:400;transform:translateX(-100%)">0,00</div>
<div class="t" style="left:740.5px;top:462.29999999999995px;font-size:6.6px;color:#111;font-weight:400;">Левина Светлана Ник...</div>
<div class="t" style="left:821.8px;top:462.29999999999995px;font-size:6.6px;color:#111;font-weight:400;">2</div>
<div class="t" style="left:903.8px;top:462.29999999999995px;font-size:6.6px;color:#111;font-weight:400;">10136</div>
<div class="t" style="left:985.5px;top:462.29999999999995px;font-size:6.6px;color:#111;font-weight:400;">54001266003195</div>
<div class="t" style="left:1067.8999999999999px;top:462.29999999999995px;font-size:6.6px;color:#111;font-weight:400;">1</div>
<div class="a" style="left:1px;top:471.53999999999996px;width:1146.5px;height:12.87px;background:#f7f7f7"></div>
<div class="a" style="left:1px;top:471.03999999999996px;width:1146.5px;height:1px;background:#ebebeb"></div>
<svg class="a" style="left:1.8px;top:472.23999999999995px" width="10" height="10" viewBox="0 0 10 10"><circle cx="5" cy="5" r="4.6" fill="url(#gg)"/><circle cx="5" cy="5" r="4.7" fill="none" stroke="#33b033" stroke-width="0.5"/><path d="M3.8 2.8 L6.6 5 L3.8 7.2 Z" fill="#333"/></svg>
<div class="t" style="left:13px;top:475.15px;font-size:6.67px;color:#111;font-weight:400;">AR-52- шкаф настенный с 2 распашными металлическими дверями, стеклянной полкой</div>
<div class="t" style="left:328.5px;top:475.15px;font-size:6.6px;color:#111;font-weight:400;">1013604101</div>
<div class="t" style="left:410.8px;top:475.15px;font-size:6.6px;color:#111;font-weight:400;">000000054745324</div>
<div class="t" style="left:569.0px;top:475.15px;font-size:6.6px;color:#111;font-weight:400;transform:translateX(-100%)">9 747,85</div>
<div class="t" style="left:651.6px;top:475.15px;font-size:6.6px;color:#111;font-weight:400;transform:translateX(-100%)">9 747,85</div>
<div class="t" style="left:733.6px;top:475.15px;font-size:6.6px;color:#111;font-weight:400;transform:translateX(-100%)">0,00</div>
<div class="t" style="left:740.5px;top:475.15px;font-size:6.6px;color:#111;font-weight:400;">Никонова Галина Ник...</div>
<div class="t" style="left:821.8px;top:475.15px;font-size:6.6px;color:#111;font-weight:400;">2</div>
<div class="t" style="left:903.8px;top:475.15px;font-size:6.6px;color:#111;font-weight:400;">10136</div>
<div class="t" style="left:985.5px;top:475.15px;font-size:6.6px;color:#111;font-weight:400;">54001266003190</div>
<div class="t" style="left:1067.8999999999999px;top:475.15px;font-size:6.6px;color:#111;font-weight:400;">1</div>
<div class="a" style="left:1px;top:484.40999999999997px;width:1146.5px;height:12.87px;background:#fcfcfd"></div>
<div class="a" style="left:1px;top:483.90999999999997px;width:1146.5px;height:1px;background:#ebebeb"></div>
<svg class="a" style="left:1.8px;top:485.10999999999996px" width="10" height="10" viewBox="0 0 10 10"><circle cx="5" cy="5" r="4.6" fill="url(#gg)"/><circle cx="5" cy="5" r="4.7" fill="none" stroke="#33b033" stroke-width="0.5"/><path d="M3.8 2.8 L6.6 5 L3.8 7.2 Z" fill="#333"/></svg>
<div class="t" style="left:13px;top:488.0px;font-size:6.67px;color:#111;font-weight:400;">AR-52- шкаф настенный с 2 распашными металлическими дверями, стеклянной полкой</div>
<div class="t" style="left:328.5px;top:488.0px;font-size:6.6px;color:#111;font-weight:400;">1013604102</div>
<div class="t" style="left:410.8px;top:488.0px;font-size:6.6px;color:#111;font-weight:400;">000000054745323</div>
<div class="t" style="left:569.0px;top:488.0px;font-size:6.6px;color:#111;font-weight:400;transform:translateX(-100%)">9 747,85</div>
<div class="t" style="left:651.6px;top:488.0px;font-size:6.6px;color:#111;font-weight:400;transform:translateX(-100%)">9 747,85</div>
<div class="t" style="left:733.6px;top:488.0px;font-size:6.6px;color:#111;font-weight:400;transform:translateX(-100%)">0,00</div>
<div class="t" style="left:740.5px;top:488.0px;font-size:6.6px;color:#111;font-weight:400;">Никонова Галина Ник...</div>
<div class="t" style="left:821.8px;top:488.0px;font-size:6.6px;color:#111;font-weight:400;">2</div>
<div class="t" style="left:903.8px;top:488.0px;font-size:6.6px;color:#111;font-weight:400;">10136</div>
<div class="t" style="left:985.5px;top:488.0px;font-size:6.6px;color:#111;font-weight:400;">54001266003191</div>
<div class="t" style="left:1067.8999999999999px;top:488.0px;font-size:6.6px;color:#111;font-weight:400;">1</div>
<div class="a" style="left:1px;top:497.28px;width:1146.5px;height:12.87px;background:#f7f7f7"></div>
<div class="a" style="left:1px;top:496.78px;width:1146.5px;height:1px;background:#ebebeb"></div>
<svg class="a" style="left:1.8px;top:497.97999999999996px" width="10" height="10" viewBox="0 0 10 10"><circle cx="5" cy="5" r="4.6" fill="url(#gg)"/><circle cx="5" cy="5" r="4.7" fill="none" stroke="#33b033" stroke-width="0.5"/><path d="M3.8 2.8 L6.6 5 L3.8 7.2 Z" fill="#333"/></svg>
<div class="t" style="left:13px;top:500.84999999999997px;font-size:6.67px;color:#111;font-weight:400;">AR-52- шкаф настенный с 2 распашными металлическими дверями, стеклянной полкой</div>
<div class="t" style="left:328.5px;top:500.84999999999997px;font-size:6.6px;color:#111;font-weight:400;">1013603785</div>
<div class="t" style="left:410.8px;top:500.84999999999997px;font-size:6.6px;color:#111;font-weight:400;">000000054744932</div>
<div class="t" style="left:569.0px;top:500.84999999999997px;font-size:6.6px;color:#111;font-weight:400;transform:translateX(-100%)">9 747,85</div>
<div class="t" style="left:651.6px;top:500.84999999999997px;font-size:6.6px;color:#111;font-weight:400;transform:translateX(-100%)">9 747,85</div>
<div class="t" style="left:733.6px;top:500.84999999999997px;font-size:6.6px;color:#111;font-weight:400;transform:translateX(-100%)">0,00</div>
<div class="t" style="left:740.5px;top:500.84999999999997px;font-size:6.6px;color:#111;font-weight:400;">Никонова Галина Ник...</div>
<div class="t" style="left:821.8px;top:500.84999999999997px;font-size:6.6px;color:#111;font-weight:400;">2</div>
<div class="t" style="left:903.8px;top:500.84999999999997px;font-size:6.6px;color:#111;font-weight:400;">10136</div>
<div class="t" style="left:985.5px;top:500.84999999999997px;font-size:6.6px;color:#111;font-weight:400;">54001266002863</div>
<div class="t" style="left:1067.8999999999999px;top:500.84999999999997px;font-size:6.6px;color:#111;font-weight:400;">1</div>
<div class="a" style="left:1px;top:510.15px;width:1146.5px;height:12.87px;background:#fcfcfd"></div>
<div class="a" style="left:1px;top:509.65px;width:1146.5px;height:1px;background:#ebebeb"></div>
<svg class="a" style="left:1.8px;top:510.84999999999997px" width="10" height="10" viewBox="0 0 10 10"><circle cx="5" cy="5" r="4.6" fill="url(#gg)"/><circle cx="5" cy="5" r="4.7" fill="none" stroke="#33b033" stroke-width="0.5"/><path d="M3.8 2.8 L6.6 5 L3.8 7.2 Z" fill="#333"/></svg>
<div class="t" style="left:13px;top:513.7px;font-size:6.67px;color:#111;font-weight:400;">AR-52- шкаф настенный с 2 распашными металлическими дверями, стеклянной полкой</div>
<div class="t" style="left:328.5px;top:513.7px;font-size:6.6px;color:#111;font-weight:400;">1013603784</div>
<div class="t" style="left:410.8px;top:513.7px;font-size:6.6px;color:#111;font-weight:400;">000000054744931</div>
<div class="t" style="left:569.0px;top:513.7px;font-size:6.6px;color:#111;font-weight:400;transform:translateX(-100%)">9 747,85</div>
<div class="t" style="left:651.6px;top:513.7px;font-size:6.6px;color:#111;font-weight:400;transform:translateX(-100%)">9 747,85</div>
<div class="t" style="left:733.6px;top:513.7px;font-size:6.6px;color:#111;font-weight:400;transform:translateX(-100%)">0,00</div>
<div class="t" style="left:740.5px;top:513.7px;font-size:6.6px;color:#111;font-weight:400;">Шигаева Татьяна Ива...</div>
<div class="t" style="left:821.8px;top:513.7px;font-size:6.6px;color:#111;font-weight:400;">2</div>
<div class="t" style="left:903.8px;top:513.7px;font-size:6.6px;color:#111;font-weight:400;">10136</div>
<div class="t" style="left:985.5px;top:513.7px;font-size:6.6px;color:#111;font-weight:400;">54001266002844</div>
<div class="t" style="left:1067.8999999999999px;top:513.7px;font-size:6.6px;color:#111;font-weight:400;">1</div>
<div class="a" style="left:1px;top:523.02px;width:1146.5px;height:12.87px;background:#f7f7f7"></div>
<div class="a" style="left:1px;top:522.52px;width:1146.5px;height:1px;background:#ebebeb"></div>
<svg class="a" style="left:1.8px;top:523.72px" width="10" height="10" viewBox="0 0 10 10"><circle cx="5" cy="5" r="4.6" fill="url(#gg)"/><circle cx="5" cy="5" r="4.7" fill="none" stroke="#33b033" stroke-width="0.5"/><path d="M3.8 2.8 L6.6 5 L3.8 7.2 Z" fill="#333"/></svg>
<div class="t" style="left:13px;top:526.55px;font-size:6.67px;color:#111;font-weight:400;">AR-52- шкаф настенный с 2 распашными металлическими дверями, стеклянной полкой</div>
<div class="t" style="left:328.5px;top:526.55px;font-size:6.6px;color:#111;font-weight:400;">1013603783</div>
<div class="t" style="left:410.8px;top:526.55px;font-size:6.6px;color:#111;font-weight:400;">000000054744930</div>
<div class="t" style="left:569.0px;top:526.55px;font-size:6.6px;color:#111;font-weight:400;transform:translateX(-100%)">9 747,85</div>
<div class="t" style="left:651.6px;top:526.55px;font-size:6.6px;color:#111;font-weight:400;transform:translateX(-100%)">9 747,85</div>
<div class="t" style="left:733.6px;top:526.55px;font-size:6.6px;color:#111;font-weight:400;transform:translateX(-100%)">0,00</div>
<div class="t" style="left:740.5px;top:526.55px;font-size:6.6px;color:#111;font-weight:400;">Шигаева Татьяна Ива...</div>
<div class="t" style="left:821.8px;top:526.55px;font-size:6.6px;color:#111;font-weight:400;">2</div>
<div class="t" style="left:903.8px;top:526.55px;font-size:6.6px;color:#111;font-weight:400;">10136</div>
<div class="t" style="left:985.5px;top:526.55px;font-size:6.6px;color:#111;font-weight:400;">54001266002845</div>
<div class="t" style="left:1067.8999999999999px;top:526.55px;font-size:6.6px;color:#111;font-weight:400;">1</div>
<div class="a" style="left:1px;top:535.89px;width:1146.5px;height:12.87px;background:#fcfcfd"></div>
<div class="a" style="left:1px;top:535.39px;width:1146.5px;height:1px;background:#ebebeb"></div>
<svg class="a" style="left:1.8px;top:536.59px" width="10" height="10" viewBox="0 0 10 10"><circle cx="5" cy="5" r="4.6" fill="url(#gg)"/><circle cx="5" cy="5" r="4.7" fill="none" stroke="#33b033" stroke-width="0.5"/><path d="M3.8 2.8 L6.6 5 L3.8 7.2 Z" fill="#333"/></svg>
<div class="t" style="left:13px;top:539.4px;font-size:6.67px;color:#111;font-weight:400;">AR-52- шкаф настенный с 2 распашными металлическими дверями, стеклянной полкой</div>
<div class="t" style="left:328.5px;top:539.4px;font-size:6.6px;color:#111;font-weight:400;">1013603782</div>
<div class="t" style="left:410.8px;top:539.4px;font-size:6.6px;color:#111;font-weight:400;">000000054744929</div>
<div class="t" style="left:569.0px;top:539.4px;font-size:6.6px;color:#111;font-weight:400;transform:translateX(-100%)">9 747,85</div>
<div class="t" style="left:651.6px;top:539.4px;font-size:6.6px;color:#111;font-weight:400;transform:translateX(-100%)">9 747,85</div>
<div class="t" style="left:733.6px;top:539.4px;font-size:6.6px;color:#111;font-weight:400;transform:translateX(-100%)">0,00</div>
<div class="t" style="left:740.5px;top:539.4px;font-size:6.6px;color:#111;font-weight:400;">Шигаева Татьяна Ива...</div>
<div class="t" style="left:821.8px;top:539.4px;font-size:6.6px;color:#111;font-weight:400;">2</div>
<div class="t" style="left:903.8px;top:539.4px;font-size:6.6px;color:#111;font-weight:400;">10136</div>
<div class="t" style="left:985.5px;top:539.4px;font-size:6.6px;color:#111;font-weight:400;">54001266002846</div>
<div class="t" style="left:1067.8999999999999px;top:539.4px;font-size:6.6px;color:#111;font-weight:400;">1</div>
<div class="a" style="left:1px;top:548.76px;width:1146.5px;height:12.87px;background:#f7f7f7"></div>
<div class="a" style="left:1px;top:548.26px;width:1146.5px;height:1px;background:#ebebeb"></div>
<svg class="a" style="left:1.8px;top:549.46px" width="10" height="10" viewBox="0 0 10 10"><circle cx="5" cy="5" r="4.6" fill="url(#gg)"/><circle cx="5" cy="5" r="4.7" fill="none" stroke="#33b033" stroke-width="0.5"/><path d="M3.8 2.8 L6.6 5 L3.8 7.2 Z" fill="#333"/></svg>
<div class="t" style="left:13px;top:552.25px;font-size:6.67px;color:#111;font-weight:400;">AR-52- шкаф настенный с 2 распашными металлическими дверями, стеклянной полкой</div>
<div class="t" style="left:328.5px;top:552.25px;font-size:6.6px;color:#111;font-weight:400;">1013603781</div>
<div class="t" style="left:410.8px;top:552.25px;font-size:6.6px;color:#111;font-weight:400;">000000054744928</div>
<div class="t" style="left:569.0px;top:552.25px;font-size:6.6px;color:#111;font-weight:400;transform:translateX(-100%)">9 747,85</div>
<div class="t" style="left:651.6px;top:552.25px;font-size:6.6px;color:#111;font-weight:400;transform:translateX(-100%)">9 747,85</div>
<div class="t" style="left:733.6px;top:552.25px;font-size:6.6px;color:#111;font-weight:400;transform:translateX(-100%)">0,00</div>
<div class="t" style="left:740.5px;top:552.25px;font-size:6.6px;color:#111;font-weight:400;">Шигаева Татьяна Ива...</div>
<div class="t" style="left:821.8px;top:552.25px;font-size:6.6px;color:#111;font-weight:400;">2</div>
<div class="t" style="left:903.8px;top:552.25px;font-size:6.6px;color:#111;font-weight:400;">10136</div>
<div class="t" style="left:985.5px;top:552.25px;font-size:6.6px;color:#111;font-weight:400;">54001266002847</div>
<div class="t" style="left:1067.8999999999999px;top:552.25px;font-size:6.6px;color:#111;font-weight:400;">1</div>
<div class="a" style="left:1px;top:561.63px;width:1146.5px;height:12.87px;background:#fcfcfd"></div>
<div class="a" style="left:1px;top:561.13px;width:1146.5px;height:1px;background:#ebebeb"></div>
<svg class="a" style="left:1.8px;top:562.33px" width="10" height="10" viewBox="0 0 10 10"><circle cx="5" cy="5" r="4.6" fill="url(#gg)"/><circle cx="5" cy="5" r="4.7" fill="none" stroke="#33b033" stroke-width="0.5"/><path d="M3.8 2.8 L6.6 5 L3.8 7.2 Z" fill="#333"/></svg>
<div class="t" style="left:13px;top:565.0999999999999px;font-size:6.67px;color:#111;font-weight:400;">AR-52- шкаф настенный с 2 распашными металлическими дверями, стеклянной полкой</div>
<div class="t" style="left:328.5px;top:565.0999999999999px;font-size:6.6px;color:#111;font-weight:400;">1013603780</div>
<div class="t" style="left:410.8px;top:565.0999999999999px;font-size:6.6px;color:#111;font-weight:400;">000000054744927</div>
<div class="t" style="left:569.0px;top:565.0999999999999px;font-size:6.6px;color:#111;font-weight:400;transform:translateX(-100%)">9 747,85</div>
<div class="t" style="left:651.6px;top:565.0999999999999px;font-size:6.6px;color:#111;font-weight:400;transform:translateX(-100%)">9 747,85</div>
<div class="t" style="left:733.6px;top:565.0999999999999px;font-size:6.6px;color:#111;font-weight:400;transform:translateX(-100%)">0,00</div>
<div class="t" style="left:740.5px;top:565.0999999999999px;font-size:6.6px;color:#111;font-weight:400;">Шигаева Татьяна Ива...</div>
<div class="t" style="left:821.8px;top:565.0999999999999px;font-size:6.6px;color:#111;font-weight:400;">2</div>
<div class="t" style="left:903.8px;top:565.0999999999999px;font-size:6.6px;color:#111;font-weight:400;">10136</div>
<div class="t" style="left:985.5px;top:565.0999999999999px;font-size:6.6px;color:#111;font-weight:400;">54001266002848</div>
<div class="t" style="left:1067.8999999999999px;top:565.0999999999999px;font-size:6.6px;color:#111;font-weight:400;">1</div>
<div class="a" style="left:1px;top:574.5px;width:1146.5px;height:12.87px;background:#f7f7f7"></div>
<div class="a" style="left:1px;top:574.0px;width:1146.5px;height:1px;background:#ebebeb"></div>
<svg class="a" style="left:1.8px;top:575.2px" width="10" height="10" viewBox="0 0 10 10"><circle cx="5" cy="5" r="4.6" fill="url(#gg)"/><circle cx="5" cy="5" r="4.7" fill="none" stroke="#33b033" stroke-width="0.5"/><path d="M3.8 2.8 L6.6 5 L3.8 7.2 Z" fill="#333"/></svg>
<div class="t" style="left:13px;top:577.95px;font-size:6.67px;color:#111;font-weight:400;">AR-52- шкаф настенный с 2 распашными металлическими дверями, стеклянной полкой</div>
<div class="t" style="left:328.5px;top:577.95px;font-size:6.6px;color:#111;font-weight:400;">1013604110</div>
<div class="t" style="left:410.8px;top:577.95px;font-size:6.6px;color:#111;font-weight:400;">000000054745315</div>
<div class="t" style="left:569.0px;top:577.95px;font-size:6.6px;color:#111;font-weight:400;transform:translateX(-100%)">9 747,85</div>
<div class="t" style="left:651.6px;top:577.95px;font-size:6.6px;color:#111;font-weight:400;transform:translateX(-100%)">9 747,85</div>
<div class="t" style="left:733.6px;top:577.95px;font-size:6.6px;color:#111;font-weight:400;transform:translateX(-100%)">0,00</div>
<div class="t" style="left:740.5px;top:577.95px;font-size:6.6px;color:#111;font-weight:400;">Шигаева Татьяна Ива...</div>
<div class="t" style="left:821.8px;top:577.95px;font-size:6.6px;color:#111;font-weight:400;">2</div>
<div class="t" style="left:903.8px;top:577.95px;font-size:6.6px;color:#111;font-weight:400;">10136</div>
<div class="t" style="left:985.5px;top:577.95px;font-size:6.6px;color:#111;font-weight:400;">54001266003199</div>
<div class="t" style="left:1067.8999999999999px;top:577.95px;font-size:6.6px;color:#111;font-weight:400;">1</div>
<div class="a" style="left:324.5px;top:188.4px;width:1px;height:398.96999999999997px;background:#ededed"></div>
<div class="a" style="left:406.8px;top:188.4px;width:1px;height:398.96999999999997px;background:#ededed"></div>
<div class="a" style="left:488.8px;top:188.4px;width:1px;height:398.96999999999997px;background:#ededed"></div>
<div class="a" style="left:571.0px;top:188.4px;width:1px;height:398.96999999999997px;background:#ededed"></div>
<div class="a" style="left:653.6px;top:188.4px;width:1px;height:398.96999999999997px;background:#ededed"></div>
<div class="a" style="left:735.6px;top:188.4px;width:1px;height:398.96999999999997px;background:#ededed"></div>
<div class="a" style="left:818.0px;top:188.4px;width:1px;height:398.96999999999997px;background:#ededed"></div>
<div class="a" style="left:900.0px;top:188.4px;width:1px;height:398.96999999999997px;background:#ededed"></div>
<div class="a" style="left:981.7px;top:188.4px;width:1px;height:398.96999999999997px;background:#ededed"></div>
<div class="a" style="left:1064.1px;top:188.4px;width:1px;height:398.96999999999997px;background:#ededed"></div>
<svg class="a" style="left:1150px;top:191.6px" width="6" height="4" viewBox="0 0 6 4"><path d="M0 3.5 L3 0.5 L6 3.5 Z" fill="#777"/></svg>
<div class="a" style="left:1150.2px;top:200px;width:5.8px;height:10.6px;border-radius:3px;background:#8a8a8a"></div>
<svg class="a" style="left:1150px;top:583.5px" width="6" height="4" viewBox="0 0 6 4"><path d="M0 0.5 L3 3.5 L6 0.5 Z" fill="#999"/></svg>
<div class="a" style="left:1px;top:591.8px;width:1146.5px;height:13px;background:#f0f0f2"></div>
<div class="t" style="left:570.4px;top:594.2px;font-size:7.6px;color:#111;font-weight:700;transform:translateX(-100%)">352 401 414,25</div>
<div class="t" style="left:652.6px;top:594.2px;font-size:7.6px;color:#111;font-weight:700;transform:translateX(-100%)">259 948 832,68</div>
<div class="t" style="left:734.4px;top:594.2px;font-size:7.6px;color:#111;font-weight:700;transform:translateX(-100%)">92 452 581,57</div>
<div class="t" style="left:1068.6px;top:594.2px;font-size:7.6px;color:#111;font-weight:700;">3118</div>
<div class="a" style="left:1157.5px;top:140.3px;width:20.5px;height:464.4px;background:#dfeaf5"></div>
<div class="a" style="left:1161px;top:140.3px;width:13.5px;height:464.4px;background:#cfdfea;border-left:0.5px solid #c0d0de;border-right:0.5px solid #c0d0de"></div>
<div class="a" style="left:1163px;top:143.8px;width:9px;height:8.6px;background:#f4f8fb;border:0.6px solid #b9c8d6;border-radius:1px"></div>
<svg class="a" style="left:1164.5px;top:145.6px" width="6" height="5" viewBox="0 0 6 5"><path d="M2.6 0.5 L0.7 2.5 L2.6 4.5 M5.3 0.5 L3.4 2.5 L5.3 4.5" stroke="#456" stroke-width="0.8" fill="none"/></svg>
<div class="a" style="left:1135px;top:461.9px;width:24.5px;height:11px;background:#e3effa;border:0.8px solid #b6cbe0;border-radius:1px"></div>
<div class="t" style="left:1138.3px;top:464.5px;font-size:6.6px;color:#222;font-weight:400;">1</div>
<svg class="a" style="left:1125px;top:449.5px" width="8" height="13" viewBox="0 0 8 13"><path d="M0.5 0.5 L0.5 10.5 L3 8.3 L4.8 12.3 L6.3 11.6 L4.6 7.8 L7.5 7.6 Z" fill="#fff" stroke="#111" stroke-width="0.8"/></svg>
<div class="a" style="left:0;top:604.7px;width:1178px;height:3.3px;background:#3a98d4"></div>
<div class="a" style="left:0;top:608px;width:1178px;height:22.5px;background:#0b6ea8"></div>
<div class="a" style="left:0;top:608px;width:1178px;height:22.5px;opacity:.15;background-image:radial-gradient(#000 0.5px,transparent 0.6px);background-size:2px 2px"></div>
<div class="a" style="left:1.3px;top:612.4px;width:40.8px;height:17.4px;border-radius:2px 2px 0 0;background:linear-gradient(#7fb3da 0%,#2a7fbf 40%,#1768a6 100%)"></div>
<div class="t" style="left:9.1px;top:615.6px;font-size:11.0px;color:#fff;font-weight:700;">Пуск</div>
<div class="a" style="left:44.9px;top:612.4px;width:61.6px;height:17.6px;border-radius:2px 2px 0 0;background:linear-gradient(#fafafa,#e6e6e6)"></div><svg class="a" style="left:48.199999999999996px;top:615.2px" width="10" height="12" viewBox="0 0 10 12"><path d="M2.5 1.2 Q4 0.6 6.5 1 L8.6 3 L9 8.6 L7.6 10.6 L3.4 10.8 L1.3 9.6 L0.8 4.8 Z" fill="#eef4fa"/><path d="M1.5 3.5 Q0.8 7 2.2 9.8 L4 10.8" stroke="#222" stroke-width="0.9" fill="none"/><path d="M3.5 4.5 L4.5 8" stroke="#555" stroke-width="0.9"/><circle cx="4.8" cy="3" r="0.9" fill="#4a90d9"/><circle cx="6.4" cy="5.6" r="1" fill="#6aaee8"/><rect x="4.6" y="7.8" width="1.6" height="2" fill="#6aa832"/><circle cx="7.4" cy="8.6" r="1.6" fill="#b8602e"/><path d="M2.4 1.6 L3.6 1.2" stroke="#e0c030" stroke-width="0.8"/><path d="M4.8 0.9 L6 0.8" stroke="#b02030" stroke-width="0.8"/></svg><div class="t" style="left:59.8px;top:618.7px;font-size:6.75px;color:#444;font-weight:400;">Картотека ОС</div>
<div class="a" style="left:109px;top:612.4px;width:88.9px;height:17.6px;border-radius:2px 2px 0 0;background:linear-gradient(#fafafa,#e6e6e6)"></div><svg class="a" style="left:112.3px;top:616.5px" width="10" height="9" viewBox="0 0 10 9"><rect x="0.5" y="0.5" width="9" height="8" fill="#f4f6fa" stroke="#5a8ad0" stroke-width="0.8"/><rect x="0.5" y="0.5" width="9" height="1.8" fill="#7aa6e0"/></svg><div class="t" style="left:123.9px;top:618.7px;font-size:6.75px;color:#444;font-weight:400;">Реестр операций с ОС</div>
<div class="a" style="left:200.5px;top:612.4px;width:88.30000000000001px;height:17.6px;border-radius:2px 2px 0 0;background:linear-gradient(#fafafa,#e6e6e6)"></div><svg class="a" style="left:203.8px;top:616.5px" width="10" height="9" viewBox="0 0 10 9"><rect x="0.5" y="0.5" width="9" height="8" fill="#f4f6fa" stroke="#5a8ad0" stroke-width="0.8"/><rect x="0.5" y="0.5" width="9" height="1.8" fill="#7aa6e0"/></svg><div class="t" style="left:215.4px;top:618.7px;font-size:6.75px;color:#444;font-weight:400;">Реестр операций с ОС</div>
<div class="a" style="left:291.7px;top:612.4px;width:61.60000000000002px;height:17.6px;border-radius:2px 2px 0 0;background:linear-gradient(#fafafa,#e6e6e6)"></div><svg class="a" style="left:295.0px;top:615.2px" width="10" height="12" viewBox="0 0 10 12"><path d="M2.5 1.2 Q4 0.6 6.5 1 L8.6 3 L9 8.6 L7.6 10.6 L3.4 10.8 L1.3 9.6 L0.8 4.8 Z" fill="#eef4fa"/><path d="M1.5 3.5 Q0.8 7 2.2 9.8 L4 10.8" stroke="#222" stroke-width="0.9" fill="none"/><path d="M3.5 4.5 L4.5 8" stroke="#555" stroke-width="0.9"/><circle cx="4.8" cy="3" r="0.9" fill="#4a90d9"/><circle cx="6.4" cy="5.6" r="1" fill="#6aaee8"/><rect x="4.6" y="7.8" width="1.6" height="2" fill="#6aa832"/><circle cx="7.4" cy="8.6" r="1.6" fill="#b8602e"/><path d="M2.4 1.6 L3.6 1.2" stroke="#e0c030" stroke-width="0.8"/><path d="M4.8 0.9 L6 0.8" stroke="#b02030" stroke-width="0.8"/></svg><div class="t" style="left:306.59999999999997px;top:618.7px;font-size:6.75px;color:#444;font-weight:400;">Картотека ОС</div>
<div class="a" style="left:356.2px;top:612.4px;width:88.30000000000001px;height:17.6px;border-radius:2px 2px 0 0;background:linear-gradient(#d5dde6,#c8d1da)"></div><svg class="a" style="left:359.5px;top:616.5px" width="10" height="9" viewBox="0 0 10 9"><rect x="0.5" y="0.5" width="9" height="8" fill="#e8edf2" stroke="#a8bcd5" stroke-width="0.8"/><rect x="0.5" y="0.5" width="9" height="1.8" fill="#b9cde6"/></svg><div class="t" style="left:371.09999999999997px;top:618.7px;font-size:6.75px;color:#999;font-weight:400;">Реестр операций с ОС</div>
<div class="a" style="left:447px;top:612.4px;width:88.39999999999998px;height:17.6px;border-radius:2px 2px 0 0;background:linear-gradient(#fafafa,#e6e6e6)"></div><svg class="a" style="left:450.3px;top:616px" width="10" height="10" viewBox="0 0 10 10"><rect x="0.5" y="2" width="8" height="7.5" fill="#f4f6fa" stroke="#5a8ad0" stroke-width="0.8"/><path d="M3 8 L4 6 L9 1 L9.8 1.8 L5 7 Z" fill="#e8a020"/></svg><div class="t" style="left:461.9px;top:618.7px;font-size:6.75px;color:#444;font-weight:400;">Реестр операций с ОС</div>
<div class="a" style="left:538.9px;top:612.4px;width:60.700000000000045px;height:17.6px;border-radius:2px 2px 0 0;background:linear-gradient(#fafafa,#e6e6e6)"></div><svg class="a" style="left:542.1999999999999px;top:615.2px" width="10" height="12" viewBox="0 0 10 12"><path d="M2.5 1.2 Q4 0.6 6.5 1 L8.6 3 L9 8.6 L7.6 10.6 L3.4 10.8 L1.3 9.6 L0.8 4.8 Z" fill="#eef4fa"/><path d="M1.5 3.5 Q0.8 7 2.2 9.8 L4 10.8" stroke="#222" stroke-width="0.9" fill="none"/><path d="M3.5 4.5 L4.5 8" stroke="#555" stroke-width="0.9"/><circle cx="4.8" cy="3" r="0.9" fill="#4a90d9"/><circle cx="6.4" cy="5.6" r="1" fill="#6aaee8"/><rect x="4.6" y="7.8" width="1.6" height="2" fill="#6aa832"/><circle cx="7.4" cy="8.6" r="1.6" fill="#b8602e"/><path d="M2.4 1.6 L3.6 1.2" stroke="#e0c030" stroke-width="0.8"/><path d="M4.8 0.9 L6 0.8" stroke="#b02030" stroke-width="0.8"/></svg><div class="t" style="left:553.8px;top:618.7px;font-size:6.75px;color:#444;font-weight:400;">Картотека ОС</div>
<div class="a" style="left:602.3px;top:612.4px;width:89.20000000000005px;height:17.6px;border-radius:2px 2px 0 0;background:linear-gradient(#fafafa,#e6e6e6)"></div><svg class="a" style="left:605.5999999999999px;top:616.5px" width="10" height="9" viewBox="0 0 10 9"><rect x="0.5" y="0.5" width="9" height="8" fill="#f4f6fa" stroke="#5a8ad0" stroke-width="0.8"/><rect x="0.5" y="0.5" width="9" height="1.8" fill="#7aa6e0"/></svg><div class="t" style="left:617.1999999999999px;top:618.7px;font-size:6.75px;color:#444;font-weight:400;">Реестр операций с ОС</div>
<div class="a" style="left:694.2px;top:612.4px;width:87.5px;height:17.6px;border-radius:2px 2px 0 0;background:linear-gradient(#fafafa,#e6e6e6)"></div><svg class="a" style="left:697.5px;top:616.5px" width="10" height="9" viewBox="0 0 10 9"><rect x="0.5" y="0.5" width="9" height="8" fill="#f4f6fa" stroke="#5a8ad0" stroke-width="0.8"/><rect x="0.5" y="0.5" width="9" height="1.8" fill="#7aa6e0"/></svg><div class="t" style="left:709.1px;top:618.7px;font-size:6.75px;color:#444;font-weight:400;">Реестр операций с ОС</div>
<div class="a" style="left:784.4px;top:612.4px;width:61.39999999999998px;height:17.6px;border-radius:2px 2px 0 0;background:linear-gradient(#fafafa,#e6e6e6)"></div><svg class="a" style="left:787.6999999999999px;top:615.2px" width="10" height="12" viewBox="0 0 10 12"><path d="M2.5 1.2 Q4 0.6 6.5 1 L8.6 3 L9 8.6 L7.6 10.6 L3.4 10.8 L1.3 9.6 L0.8 4.8 Z" fill="#eef4fa"/><path d="M1.5 3.5 Q0.8 7 2.2 9.8 L4 10.8" stroke="#222" stroke-width="0.9" fill="none"/><path d="M3.5 4.5 L4.5 8" stroke="#555" stroke-width="0.9"/><circle cx="4.8" cy="3" r="0.9" fill="#4a90d9"/><circle cx="6.4" cy="5.6" r="1" fill="#6aaee8"/><rect x="4.6" y="7.8" width="1.6" height="2" fill="#6aa832"/><circle cx="7.4" cy="8.6" r="1.6" fill="#b8602e"/><path d="M2.4 1.6 L3.6 1.2" stroke="#e0c030" stroke-width="0.8"/><path d="M4.8 0.9 L6 0.8" stroke="#b02030" stroke-width="0.8"/></svg><div class="t" style="left:799.3px;top:618.7px;font-size:6.75px;color:#444;font-weight:400;">Картотека ОС</div>
<div class="t" style="left:1083px;top:609.9px;font-size:5.66px;color:#fff;font-weight:700;transform:translateX(-100%)">Лицензия номер: 12155; Обладатель:</div>
<div class="t" style="left:1083px;top:616.9px;font-size:5.66px;color:#fff;font-weight:700;transform:translateX(-100%)">ГБУЗ НСО "Медицинский информационно-аналитический</div>
<div class="t" style="left:1083px;top:623.4px;font-size:5.66px;color:#fff;font-weight:700;transform:translateX(-100%)">центр"</div>
<svg class="a" style="left:1090px;top:612px" width="9" height="14" viewBox="0 0 9 14"><path d="M1.2 4 Q1.2 0.8 4.5 0.8 Q7.8 0.8 7.8 3.8 Q7.8 5.5 5.8 6.6 Q4.5 7.3 4.5 9.3" stroke="#fff" stroke-width="1.7" fill="none"/><circle cx="4.5" cy="12" r="1.1" fill="#fff"/></svg>
<svg class="a" style="left:1105px;top:611px" width="16" height="13" viewBox="0 0 16 13"><path d="M1 3 H4.5 L5.5 1 H8.5 L9.5 3 H15 V12.5 H1 Z" fill="#f2f2f2"/><circle cx="8.5" cy="7.5" r="2.8" fill="none" stroke="#0b6ea8" stroke-width="1.3"/></svg>
<svg class="a" style="left:1129px;top:612.5px" width="16" height="12" viewBox="0 0 16 12"><rect x="0.7" y="0.7" width="14.6" height="10.6" fill="#fff"/><path d="M0.7 0.9 L8 7 L15.3 0.9 M0.7 11.2 L6 5.5 M15.3 11.2 L10 5.5" stroke="#0b6ea8" stroke-width="1" fill="none"/></svg>
<svg class="a" style="left:1154px;top:617px" width="15" height="8" viewBox="0 0 15 8"><path d="M0 0 H15 L7.5 7.5 Z" fill="#fff"/></svg>
<div class="t" style="left:854.3px;top:578.2px;font-size:12.3px;color:rgba(150,150,150,0.55);font-weight:400;">Активация Windows</div>
<div class="t" style="left:854.3px;top:592.8px;font-size:9.24px;color:rgba(150,150,150,0.55);font-weight:400;">Чтобы активировать Windows, перейдите в раздел "Параметры".</div>
<div class="a" style="left:0;top:630.3px;width:1178px;height:3.2px;background:#f4f4f4"></div>
<div class="a" style="left:0;top:633.5px;width:1178px;height:3.5px;background:#0a0a0a"></div>
<div class="a" style="left:30px;top:633.5px;width:177px;height:3.5px;background:#f2f2f2"></div>
<div class="a" style="left:328px;top:633.5px;width:29px;height:3.5px;background:#555"></div>
</div></body></html>
